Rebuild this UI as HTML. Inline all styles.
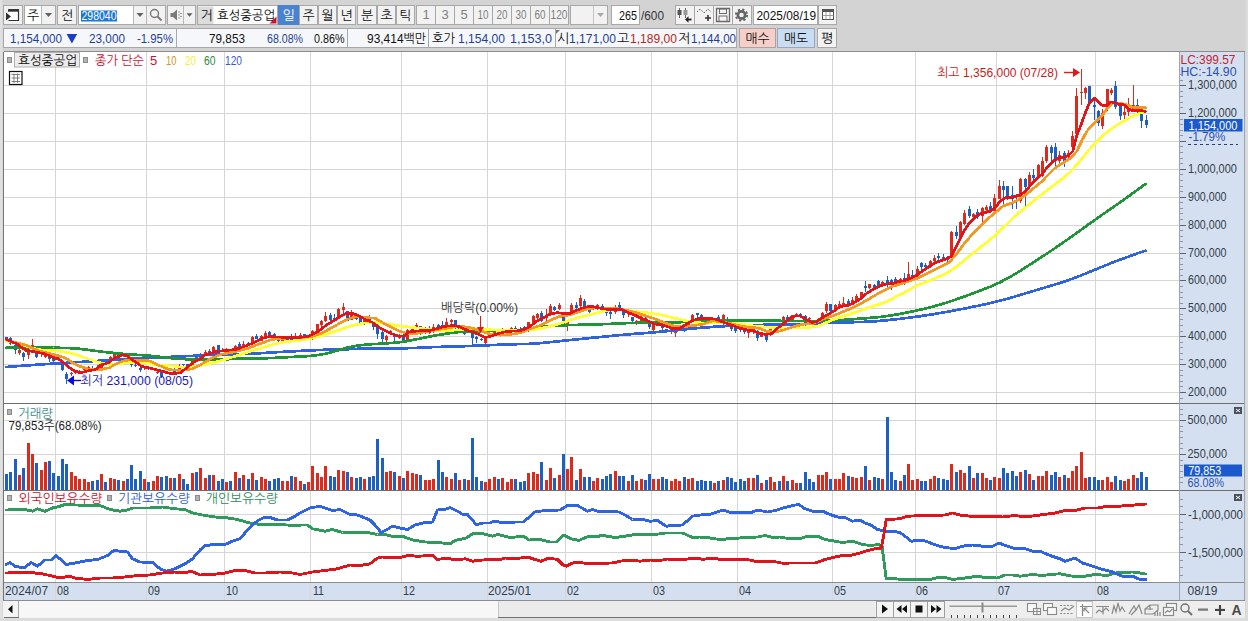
<!DOCTYPE html>
<html lang="ko"><head><meta charset="utf-8"><title>효성중공업 차트</title>
<style>html,body{margin:0;padding:0;background:#d3d3d3;overflow:hidden}svg{display:block}text{white-space:pre}</style>
</head><body>
<svg width="1248" height="621" viewBox="0 0 1248 621" font-family="'Liberation Sans', 'NanumGothic', 'Noto Sans CJK KR', sans-serif">
<rect x="0" y="0" width="1248" height="621" fill="#d3d3d3" />
<rect x="0" y="0" width="2.5" height="621" fill="#e0e0e0" />
<rect x="1245.5" y="0" width="2.5" height="621" fill="#dcdcdc" />
<rect x="0" y="618" width="1248" height="3" fill="#dcdcdc" />
<rect x="3.5" y="5.5" width="19.0" height="19.0" fill="#f2f2f2" stroke="#a8a8a8" stroke-width="1" shape-rendering="crispEdges"/>
<path d="M8.5 9.5H18.5V20.5H8.5" fill="#fff" stroke="#333" stroke-width="1.2"/>
<path d="M8 10.5H19" stroke="#333" stroke-width="2.4"/>
<polygon points="6,12.5 11,16.5 6,20.5" fill="#333"/>
<rect x="24.5" y="5.5" width="31.0" height="19.0" fill="#f2f2f2" stroke="#a8a8a8" stroke-width="1" shape-rendering="crispEdges"/>
<rect x="25" y="6" width="16" height="18" fill="#ffffff" />
<line x1="41.5" y1="6" x2="41.5" y2="24" stroke="#b8b8b8" stroke-width="1" shape-rendering="crispEdges"/>
<text x="27" y="19.5" font-size="13" fill="#111" text-anchor="start" >주</text>
<polygon points="45.0,13.0 52.0,13.0 48.5,17.0" fill="#606060"/>
<rect x="57.5" y="5.5" width="19.0" height="19.0" fill="#f2f2f2" stroke="#a8a8a8" stroke-width="1" shape-rendering="crispEdges"/>
<text x="61" y="19.5" font-size="13" fill="#111" text-anchor="start" >전</text>
<rect x="78.5" y="5.5" width="86.5" height="19.0" fill="#f2f2f2" stroke="#a8a8a8" stroke-width="1" shape-rendering="crispEdges"/>
<rect x="79" y="6" width="54" height="18" fill="#ffffff" />
<rect x="81" y="10.5" width="36" height="11" fill="#1c78d2" />
<text x="81.5" y="19.5" font-size="13" fill="#ffffff" text-anchor="start" textLength="35" lengthAdjust="spacingAndGlyphs" >298040</text>
<line x1="133.5" y1="6" x2="133.5" y2="24" stroke="#b8b8b8" stroke-width="1" shape-rendering="crispEdges"/>
<polygon points="136.5,13.0 143.5,13.0 140,17.0" fill="#606060"/>
<line x1="146.5" y1="6" x2="146.5" y2="24" stroke="#b8b8b8" stroke-width="1" shape-rendering="crispEdges"/>
<circle cx="154.5" cy="13.5" r="4" fill="none" stroke="#777" stroke-width="1.4"/>
<line x1="157.5" y1="16.5" x2="161.5" y2="20.5" stroke="#777" stroke-width="1.8" />
<rect x="167" y="5.5" width="28" height="19.0" fill="#f2f2f2" stroke="#a8a8a8" stroke-width="1" shape-rendering="crispEdges"/>
<path d="M170.5 13H173L177 9.5V20.5L173 17H170.5Z" fill="#7a7a7a"/>
<path d="M179 11.5v1M179 14.5v1M179 17.5v1M181 13v1M181 16v1" stroke="#606060" stroke-width="1.2"/>
<line x1="183.5" y1="6" x2="183.5" y2="24" stroke="#b8b8b8" stroke-width="1" shape-rendering="crispEdges"/>
<polygon points="186.5,13.25 192.5,13.25 189.5,16.75" fill="#606060"/>
<rect x="197" y="5.5" width="80" height="19.0" fill="#ffffff" stroke="#a8a8a8" stroke-width="1" shape-rendering="crispEdges"/>
<rect x="198" y="6.5" width="15.5" height="17.5" fill="#dcdcdc" />
<text x="200.5" y="19.5" font-size="13" fill="#111" text-anchor="start" >거</text>
<text x="217" y="19.5" font-size="13" fill="#111" text-anchor="start" textLength="58" lengthAdjust="spacingAndGlyphs" >효성중공업</text>
<polygon points="276.5,16.5 276.5,23.5 269.5,23.5" fill="#d01030"/>
<rect x="278.5" y="5.5" width="19.5" height="19.0" fill="#4a82d2" stroke="#4a82d2" stroke-width="1" shape-rendering="crispEdges"/>
<text x="282.5" y="19.5" font-size="13" fill="#ffffff" text-anchor="start" >일</text>
<rect x="299.5" y="5.5" width="18.0" height="19.0" fill="#f2f2f2" stroke="#a8a8a8" stroke-width="1" shape-rendering="crispEdges"/>
<text x="308.5" y="19.5" font-size="13" fill="#111" text-anchor="middle" >주</text>
<rect x="318.5" y="5.5" width="18.0" height="19.0" fill="#f2f2f2" stroke="#a8a8a8" stroke-width="1" shape-rendering="crispEdges"/>
<text x="327.5" y="19.5" font-size="13" fill="#111" text-anchor="middle" >월</text>
<rect x="337.5" y="5.5" width="17.5" height="19.0" fill="#f2f2f2" stroke="#a8a8a8" stroke-width="1" shape-rendering="crispEdges"/>
<text x="346.25" y="19.5" font-size="13" fill="#111" text-anchor="middle" >년</text>
<rect x="357.5" y="5.5" width="19.0" height="19.0" fill="#f2f2f2" stroke="#a8a8a8" stroke-width="1" shape-rendering="crispEdges"/>
<text x="367.0" y="19.5" font-size="13" fill="#111" text-anchor="middle" >분</text>
<rect x="377.5" y="5.5" width="18.0" height="19.0" fill="#f2f2f2" stroke="#a8a8a8" stroke-width="1" shape-rendering="crispEdges"/>
<text x="386.5" y="19.5" font-size="13" fill="#111" text-anchor="middle" >초</text>
<rect x="396.5" y="5.5" width="18.0" height="19.0" fill="#f2f2f2" stroke="#a8a8a8" stroke-width="1" shape-rendering="crispEdges"/>
<text x="405.5" y="19.5" font-size="13" fill="#111" text-anchor="middle" >틱</text>
<rect x="416.5" y="5.5" width="19.0" height="19.0" fill="#f2f2f2" stroke="#a8a8a8" stroke-width="1" shape-rendering="crispEdges"/>
<text x="426.0" y="19" font-size="13" fill="#808080" text-anchor="middle" >1</text>
<rect x="435.5" y="5.5" width="19.0" height="19.0" fill="#f2f2f2" stroke="#a8a8a8" stroke-width="1" shape-rendering="crispEdges"/>
<text x="445.0" y="19" font-size="13" fill="#808080" text-anchor="middle" >3</text>
<rect x="454.5" y="5.5" width="19.0" height="19.0" fill="#f2f2f2" stroke="#a8a8a8" stroke-width="1" shape-rendering="crispEdges"/>
<text x="464.0" y="19" font-size="13" fill="#808080" text-anchor="middle" >5</text>
<rect x="473.5" y="5.5" width="19.0" height="19.0" fill="#f2f2f2" stroke="#a8a8a8" stroke-width="1" shape-rendering="crispEdges"/>
<text x="483.0" y="19" font-size="13" fill="#808080" text-anchor="middle" textLength="11" lengthAdjust="spacingAndGlyphs" >10</text>
<rect x="492.5" y="5.5" width="19.0" height="19.0" fill="#f2f2f2" stroke="#a8a8a8" stroke-width="1" shape-rendering="crispEdges"/>
<text x="502.0" y="19" font-size="13" fill="#808080" text-anchor="middle" textLength="11" lengthAdjust="spacingAndGlyphs" >20</text>
<rect x="511.5" y="5.5" width="19.0" height="19.0" fill="#f2f2f2" stroke="#a8a8a8" stroke-width="1" shape-rendering="crispEdges"/>
<text x="521.0" y="19" font-size="13" fill="#808080" text-anchor="middle" textLength="11" lengthAdjust="spacingAndGlyphs" >30</text>
<rect x="530.5" y="5.5" width="19.0" height="19.0" fill="#f2f2f2" stroke="#a8a8a8" stroke-width="1" shape-rendering="crispEdges"/>
<text x="540.0" y="19" font-size="13" fill="#808080" text-anchor="middle" textLength="11" lengthAdjust="spacingAndGlyphs" >60</text>
<rect x="549.5" y="5.5" width="19.0" height="19.0" fill="#f2f2f2" stroke="#a8a8a8" stroke-width="1" shape-rendering="crispEdges"/>
<text x="559.0" y="19" font-size="13" fill="#808080" text-anchor="middle" textLength="17" lengthAdjust="spacingAndGlyphs" >120</text>
<rect x="570.5" y="5.5" width="37.0" height="19.0" fill="#f2f2f2" stroke="#a8a8a8" stroke-width="1" shape-rendering="crispEdges"/>
<line x1="593.5" y1="6" x2="593.5" y2="24" stroke="#c4c4c4" stroke-width="1" shape-rendering="crispEdges"/>
<polygon points="597.0,13.0 604.0,13.0 600.5,17.0" fill="#a8a8a8"/>
<rect x="611.5" y="5.5" width="28.0" height="19.0" fill="#ffffff" stroke="#a8a8a8" stroke-width="1" shape-rendering="crispEdges"/>
<text x="637" y="19.5" font-size="13" fill="#111" text-anchor="end" textLength="18" lengthAdjust="spacingAndGlyphs" >265</text>
<text x="641" y="19.5" font-size="13" fill="#333" text-anchor="start" textLength="23" lengthAdjust="spacingAndGlyphs" >/600</text>
<rect x="675.5" y="5.5" width="19.0" height="19.0" fill="#f2f2f2" stroke="#a8a8a8" stroke-width="1" shape-rendering="crispEdges"/>
<rect x="694.5" y="5.5" width="19.0" height="19.0" fill="#f2f2f2" stroke="#a8a8a8" stroke-width="1" shape-rendering="crispEdges"/>
<rect x="713.5" y="5.5" width="19.0" height="19.0" fill="#f2f2f2" stroke="#a8a8a8" stroke-width="1" shape-rendering="crispEdges"/>
<rect x="732.5" y="5.5" width="19.0" height="19.0" fill="#f2f2f2" stroke="#a8a8a8" stroke-width="1" shape-rendering="crispEdges"/>
<g transform="translate(-1,0)">
<path d="M680.5 8v10M686.5 8v10" stroke="#666" stroke-width="1"/><rect x="678.5" y="10" width="4" height="5" fill="#555"/><rect x="684.5" y="10" width="4" height="5" fill="#999"/>
<path d="M692.5 19.5h-4" stroke="#222" stroke-width="1.8"/><polygon points="686,19.5 689.5,16.3 689.5,22.7" fill="#222"/>
<path d="M698 12l3-3 4 4 4-4 3 3" stroke="#666" stroke-width="1" fill="none" stroke-dasharray="1.5,1"/>
<path d="M706 18h6M709 15v6" stroke="#333" stroke-width="1.6"/>
<path d="M717.5 8.5H730.5V21.5H717.5Z" fill="#f4f4f4" stroke="#6a6a6a" stroke-width="1.3"/><rect x="720.5" y="9" width="7" height="4.5" fill="none" stroke="#6a6a6a" stroke-width="1"/><rect x="720" y="16" width="8" height="5.5" fill="none" stroke="#6a6a6a" stroke-width="1"/>
<circle cx="742.5" cy="15" r="3.6" fill="none" stroke="#666" stroke-width="2.6"/><circle cx="742.5" cy="15" r="5.6" fill="none" stroke="#666" stroke-width="2" stroke-dasharray="2.2,2.2"/>
</g>
<rect x="753.5" y="5.5" width="64.0" height="19.0" fill="#ffffff" stroke="#a8a8a8" stroke-width="1" shape-rendering="crispEdges"/>
<text x="756.5" y="19.5" font-size="13" fill="#111" text-anchor="start" textLength="59.5" lengthAdjust="spacingAndGlyphs" >2025/08/19</text>
<rect x="818.5" y="5.5" width="18.0" height="19.0" fill="#f2f2f2" stroke="#a8a8a8" stroke-width="1" shape-rendering="crispEdges"/>
<rect x="822.5" y="9.5" width="11" height="10" fill="#fff" stroke="#555" stroke-width="1"/><path d="M822.5 11H833.5" stroke="#555" stroke-width="2"/><path d="M826 12v7.5M830 12v7.5M822.5 15.5h11" stroke="#888" stroke-width="0.8"/>
<rect x="3.5" y="28.5" width="172.5" height="19.0" fill="#f6f7fa" stroke="#a8a8a8" stroke-width="1" shape-rendering="crispEdges"/>
<text x="10" y="42.5" font-size="13" fill="#1e3f96" text-anchor="start" textLength="52" lengthAdjust="spacingAndGlyphs" >1,154,000</text>
<polygon points="66.6,34 77.2,34 71.9,43.4" fill="#1a3ec8"/>
<text x="89" y="42.5" font-size="13" fill="#1e3f96" text-anchor="start" textLength="36" lengthAdjust="spacingAndGlyphs" >23,000</text>
<text x="137" y="42.5" font-size="13" fill="#1e3f96" text-anchor="start" textLength="36" lengthAdjust="spacingAndGlyphs" >-1.95%</text>
<rect x="176" y="28.5" width="171.5" height="19.0" fill="#f6f7fa" stroke="#a8a8a8" stroke-width="1" shape-rendering="crispEdges"/>
<text x="209" y="42.5" font-size="13" fill="#111" text-anchor="start" textLength="36" lengthAdjust="spacingAndGlyphs" >79,853</text>
<text x="267" y="42.5" font-size="13" fill="#1e3f96" text-anchor="start" textLength="36" lengthAdjust="spacingAndGlyphs" >68.08%</text>
<text x="314" y="42.5" font-size="13" fill="#111" text-anchor="start" textLength="30.5" lengthAdjust="spacingAndGlyphs" >0.86%</text>
<rect x="347.5" y="28.5" width="81.0" height="19.0" fill="#f6f7fa" stroke="#a8a8a8" stroke-width="1" shape-rendering="crispEdges"/>
<text x="367" y="42.5" font-size="13" fill="#111" text-anchor="start" textLength="59" lengthAdjust="spacingAndGlyphs" >93,414백만</text>
<rect x="428.5" y="28.5" width="127.0" height="19.0" fill="#f6f7fa" stroke="#a8a8a8" stroke-width="1" shape-rendering="crispEdges"/>
<text x="432" y="42.5" font-size="13" fill="#111" text-anchor="start" textLength="23" lengthAdjust="spacingAndGlyphs" >호가</text>
<text x="458" y="42.5" font-size="13" fill="#1e3f96" text-anchor="start" textLength="47" lengthAdjust="spacingAndGlyphs" >1,154,00</text>
<text x="510" y="42.5" font-size="13" fill="#1e3f96" text-anchor="start" textLength="42" lengthAdjust="spacingAndGlyphs" >1,153,0</text>
<rect x="555.5" y="28.5" width="181.0" height="19.0" fill="#f6f7fa" stroke="#a8a8a8" stroke-width="1" shape-rendering="crispEdges"/>
<polygon points="556,30 560,30 556,34" fill="#777"/>
<text x="557" y="42.5" font-size="13" fill="#111" text-anchor="start" >시</text>
<text x="569" y="42.5" font-size="13" fill="#1e3f96" text-anchor="start" textLength="47" lengthAdjust="spacingAndGlyphs" >1,171,00</text>
<text x="617" y="42.5" font-size="13" fill="#111" text-anchor="start" >고</text>
<text x="630" y="42.5" font-size="13" fill="#b8281c" text-anchor="start" textLength="47" lengthAdjust="spacingAndGlyphs" >1,189,00</text>
<text x="678" y="42.5" font-size="13" fill="#111" text-anchor="start" >저</text>
<text x="691" y="42.5" font-size="13" fill="#1e3f96" text-anchor="start" textLength="45" lengthAdjust="spacingAndGlyphs" >1,144,00</text>
<rect x="739.5" y="28.5" width="36" height="19.0" fill="#f6d0c8" stroke="#b0a0a0" stroke-width="1" shape-rendering="crispEdges"/>
<text x="757.5" y="42.5" font-size="13" fill="#111" text-anchor="middle" textLength="24" lengthAdjust="spacingAndGlyphs" >매수</text>
<rect x="777.5" y="28.5" width="37" height="19.0" fill="#c8ddf4" stroke="#98a8b8" stroke-width="1" shape-rendering="crispEdges"/>
<text x="796" y="42.5" font-size="13" fill="#111" text-anchor="middle" textLength="24" lengthAdjust="spacingAndGlyphs" >매도</text>
<rect x="817.5" y="28.5" width="19" height="19.0" fill="#f2f2f2" stroke="#a8a8a8" stroke-width="1" shape-rendering="crispEdges"/>
<text x="827" y="42.5" font-size="13" fill="#111" text-anchor="middle" >평</text>
<rect x="4" y="52" width="1175" height="548" fill="#ffffff" />
<rect x="1179" y="52" width="66" height="548" fill="#d4e0f0" />
<rect x="4" y="582.5" width="1241" height="17.5" fill="#d4e0f0" />
<g shape-rendering="crispEdges">
<line x1="55.5" y1="52" x2="55.5" y2="600" stroke="#d6d6d6" stroke-width="1" />
<line x1="146.5" y1="52" x2="146.5" y2="600" stroke="#d6d6d6" stroke-width="1" />
<line x1="224.5" y1="52" x2="224.5" y2="600" stroke="#d6d6d6" stroke-width="1" />
<line x1="310.5" y1="52" x2="310.5" y2="600" stroke="#d6d6d6" stroke-width="1" />
<line x1="401.5" y1="52" x2="401.5" y2="600" stroke="#d6d6d6" stroke-width="1" />
<line x1="487.5" y1="52" x2="487.5" y2="600" stroke="#d6d6d6" stroke-width="1" />
<line x1="565.5" y1="52" x2="565.5" y2="600" stroke="#d6d6d6" stroke-width="1" />
<line x1="651.5" y1="52" x2="651.5" y2="600" stroke="#d6d6d6" stroke-width="1" />
<line x1="737.5" y1="52" x2="737.5" y2="600" stroke="#d6d6d6" stroke-width="1" />
<line x1="832.5" y1="52" x2="832.5" y2="600" stroke="#d6d6d6" stroke-width="1" />
<line x1="915.5" y1="52" x2="915.5" y2="600" stroke="#d6d6d6" stroke-width="1" />
<line x1="996.5" y1="52" x2="996.5" y2="600" stroke="#d6d6d6" stroke-width="1" />
<line x1="1095.5" y1="52" x2="1095.5" y2="600" stroke="#d6d6d6" stroke-width="1" />
<line x1="4" y1="392.5" x2="1179" y2="392.5" stroke="#d6d6d6" stroke-width="1" />
<line x1="4" y1="364.5" x2="1179" y2="364.5" stroke="#d6d6d6" stroke-width="1" />
<line x1="4" y1="336.5" x2="1179" y2="336.5" stroke="#d6d6d6" stroke-width="1" />
<line x1="4" y1="308.5" x2="1179" y2="308.5" stroke="#d6d6d6" stroke-width="1" />
<line x1="4" y1="280.5" x2="1179" y2="280.5" stroke="#d6d6d6" stroke-width="1" />
<line x1="4" y1="253.5" x2="1179" y2="253.5" stroke="#d6d6d6" stroke-width="1" />
<line x1="4" y1="225.5" x2="1179" y2="225.5" stroke="#d6d6d6" stroke-width="1" />
<line x1="4" y1="197.5" x2="1179" y2="197.5" stroke="#d6d6d6" stroke-width="1" />
<line x1="4" y1="169.5" x2="1179" y2="169.5" stroke="#d6d6d6" stroke-width="1" />
<line x1="4" y1="141.5" x2="1179" y2="141.5" stroke="#d6d6d6" stroke-width="1" />
<line x1="4" y1="113.5" x2="1179" y2="113.5" stroke="#d6d6d6" stroke-width="1" />
<line x1="4" y1="85.5" x2="1179" y2="85.5" stroke="#d6d6d6" stroke-width="1" />
<line x1="4" y1="420.5" x2="1179" y2="420.5" stroke="#d6d6d6" stroke-width="1" />
<line x1="4" y1="454.5" x2="1179" y2="454.5" stroke="#d6d6d6" stroke-width="1" />
<line x1="4" y1="514.5" x2="1179" y2="514.5" stroke="#d6d6d6" stroke-width="1" />
<line x1="4" y1="552.5" x2="1179" y2="552.5" stroke="#d6d6d6" stroke-width="1" />
</g>
<g shape-rendering="crispEdges">
<line x1="6.5" y1="336.8" x2="6.5" y2="341.3" stroke="#1e5fc2" stroke-width="1" />
<rect x="5" y="337.4" width="3" height="3.2" fill="#1e5fc2" />
<line x1="10.5" y1="337.4" x2="10.5" y2="344.5" stroke="#1e5fc2" stroke-width="1" />
<rect x="9" y="338.0" width="3" height="5.8" fill="#1e5fc2" />
<line x1="15.5" y1="343.8" x2="15.5" y2="354.1" stroke="#1e5fc2" stroke-width="1" />
<rect x="14" y="345.1" width="3" height="5.2" fill="#1e5fc2" />
<line x1="19.5" y1="349.0" x2="19.5" y2="355.4" stroke="#dc2a1c" stroke-width="1" />
<rect x="18" y="350.3" width="3" height="2.6" fill="#dc2a1c" />
<line x1="23.5" y1="352.2" x2="23.5" y2="360.6" stroke="#1e5fc2" stroke-width="1" />
<rect x="22" y="352.9" width="3" height="4.5" fill="#1e5fc2" />
<line x1="28.5" y1="346.4" x2="28.5" y2="358.7" stroke="#dc2a1c" stroke-width="1" />
<rect x="27" y="347.7" width="3" height="7.7" fill="#dc2a1c" />
<line x1="32.5" y1="339.3" x2="32.5" y2="349.0" stroke="#dc2a1c" stroke-width="1" />
<rect x="31" y="345.1" width="3" height="2.6" fill="#dc2a1c" />
<line x1="36.5" y1="349.0" x2="36.5" y2="358.0" stroke="#1e5fc2" stroke-width="1" />
<rect x="35" y="350.3" width="3" height="7.1" fill="#1e5fc2" />
<line x1="41.5" y1="349.0" x2="41.5" y2="357.4" stroke="#dc2a1c" stroke-width="1" />
<rect x="40" y="350.9" width="3" height="3.2" fill="#dc2a1c" />
<line x1="45.5" y1="347.1" x2="45.5" y2="358.0" stroke="#dc2a1c" stroke-width="1" />
<rect x="44" y="351.6" width="3" height="5.8" fill="#dc2a1c" />
<line x1="49.5" y1="353.5" x2="49.5" y2="361.9" stroke="#1e5fc2" stroke-width="1" />
<rect x="48" y="354.1" width="3" height="4.5" fill="#1e5fc2" />
<line x1="53.5" y1="358.0" x2="53.5" y2="362.5" stroke="#1e5fc2" stroke-width="1" />
<rect x="52" y="358.7" width="3" height="2.6" fill="#1e5fc2" />
<line x1="58.5" y1="355.4" x2="58.5" y2="359.9" stroke="#1e5fc2" stroke-width="1" />
<rect x="57" y="356.7" width="3" height="1.9" fill="#1e5fc2" />
<line x1="62.5" y1="361.9" x2="62.5" y2="370.9" stroke="#1e5fc2" stroke-width="1" />
<rect x="61" y="362.5" width="3" height="7.7" fill="#1e5fc2" />
<line x1="66.5" y1="372.2" x2="66.5" y2="383.8" stroke="#1e5fc2" stroke-width="1" />
<rect x="65" y="373.5" width="3" height="5.1" fill="#1e5fc2" />
<line x1="71.5" y1="371.5" x2="71.5" y2="376.1" stroke="#dc2a1c" stroke-width="1" />
<rect x="70" y="372.8" width="3" height="1.3" fill="#dc2a1c" />
<line x1="75.5" y1="370.3" x2="75.5" y2="373.5" stroke="#dc2a1c" stroke-width="1" />
<rect x="74" y="370.9" width="3" height="1.9" fill="#dc2a1c" />
<line x1="79.5" y1="370.3" x2="79.5" y2="373.1" stroke="#dc2a1c" stroke-width="1" />
<rect x="78" y="370.9" width="3" height="1.7" fill="#dc2a1c" />
<line x1="84.5" y1="367.0" x2="84.5" y2="370.9" stroke="#dc2a1c" stroke-width="1" />
<rect x="83" y="367.7" width="3" height="1.9" fill="#dc2a1c" />
<line x1="88.5" y1="366.4" x2="88.5" y2="370.3" stroke="#dc2a1c" stroke-width="1" />
<rect x="87" y="367.0" width="3" height="1.9" fill="#dc2a1c" />
<line x1="92.5" y1="366.4" x2="92.5" y2="370.9" stroke="#1e5fc2" stroke-width="1" />
<rect x="91" y="367.7" width="3" height="1.9" fill="#1e5fc2" />
<line x1="97.5" y1="365.1" x2="97.5" y2="370.3" stroke="#1e5fc2" stroke-width="1" />
<rect x="96" y="367.0" width="3" height="1.9" fill="#1e5fc2" />
<line x1="101.5" y1="359.3" x2="101.5" y2="368.3" stroke="#dc2a1c" stroke-width="1" />
<rect x="100" y="359.9" width="3" height="7.7" fill="#dc2a1c" />
<line x1="105.5" y1="358.7" x2="105.5" y2="364.5" stroke="#1e5fc2" stroke-width="1" />
<rect x="104" y="359.9" width="3" height="1.9" fill="#1e5fc2" />
<line x1="110.5" y1="356.1" x2="110.5" y2="361.2" stroke="#dc2a1c" stroke-width="1" />
<rect x="109" y="356.7" width="3" height="3.9" fill="#dc2a1c" />
<line x1="114.5" y1="352.9" x2="114.5" y2="361.2" stroke="#dc2a1c" stroke-width="1" />
<rect x="113" y="354.1" width="3" height="5.8" fill="#dc2a1c" />
<line x1="118.5" y1="352.2" x2="118.5" y2="355.4" stroke="#1e5fc2" stroke-width="1" />
<rect x="117" y="352.9" width="3" height="1.3" fill="#1e5fc2" />
<line x1="123.5" y1="352.9" x2="123.5" y2="356.7" stroke="#dc2a1c" stroke-width="1" />
<rect x="122" y="354.1" width="3" height="1.3" fill="#dc2a1c" />
<line x1="127.5" y1="353.5" x2="127.5" y2="358.7" stroke="#1e5fc2" stroke-width="1" />
<rect x="126" y="354.8" width="3" height="2.6" fill="#1e5fc2" />
<line x1="131.5" y1="358.0" x2="131.5" y2="367.0" stroke="#1e5fc2" stroke-width="1" />
<rect x="130" y="358.7" width="3" height="5.8" fill="#1e5fc2" />
<line x1="135.5" y1="363.8" x2="135.5" y2="367.0" stroke="#1e5fc2" stroke-width="1" />
<rect x="134" y="364.8" width="3" height="1.0" fill="#1e5fc2" />
<line x1="140.5" y1="367.0" x2="140.5" y2="371.5" stroke="#1e5fc2" stroke-width="1" />
<rect x="139" y="367.7" width="3" height="1.9" fill="#1e5fc2" />
<line x1="144.5" y1="365.7" x2="144.5" y2="369.6" stroke="#dc2a1c" stroke-width="1" />
<rect x="143" y="367.0" width="3" height="1.3" fill="#dc2a1c" />
<line x1="148.5" y1="366.4" x2="148.5" y2="369.6" stroke="#1e5fc2" stroke-width="1" />
<rect x="147" y="367.0" width="3" height="1.9" fill="#1e5fc2" />
<line x1="153.5" y1="367.9" x2="153.5" y2="370.0" stroke="#dc2a1c" stroke-width="1" />
<rect x="152" y="368.3" width="3" height="1.3" fill="#dc2a1c" />
<line x1="157.5" y1="370.9" x2="157.5" y2="374.1" stroke="#dc2a1c" stroke-width="1" />
<rect x="156" y="371.5" width="3" height="1.9" fill="#dc2a1c" />
<line x1="161.5" y1="370.0" x2="161.5" y2="378.2" stroke="#1e5fc2" stroke-width="1" />
<rect x="160" y="370.5" width="3" height="5.8" fill="#1e5fc2" />
<line x1="166.5" y1="372.0" x2="166.5" y2="374.4" stroke="#dc2a1c" stroke-width="1" />
<rect x="165" y="372.4" width="3" height="1.4" fill="#dc2a1c" />
<line x1="170.5" y1="371.5" x2="170.5" y2="374.2" stroke="#dc2a1c" stroke-width="1" />
<rect x="169" y="372.0" width="3" height="1.4" fill="#dc2a1c" />
<line x1="174.5" y1="366.6" x2="174.5" y2="372.0" stroke="#1e5fc2" stroke-width="1" />
<rect x="173" y="368.6" width="3" height="2.9" fill="#1e5fc2" />
<line x1="179.5" y1="364.2" x2="179.5" y2="371.5" stroke="#dc2a1c" stroke-width="1" />
<rect x="178" y="366.6" width="3" height="4.3" fill="#dc2a1c" />
<line x1="183.5" y1="363.9" x2="183.5" y2="365.7" stroke="#1e5fc2" stroke-width="1" />
<rect x="182" y="364.2" width="3" height="1.0" fill="#1e5fc2" />
<line x1="187.5" y1="364.2" x2="187.5" y2="367.6" stroke="#1e5fc2" stroke-width="1" />
<rect x="186" y="364.2" width="3" height="2.9" fill="#1e5fc2" />
<line x1="192.5" y1="358.0" x2="192.5" y2="365.2" stroke="#dc2a1c" stroke-width="1" />
<rect x="191" y="358.4" width="3" height="6.3" fill="#dc2a1c" />
<line x1="196.5" y1="354.1" x2="196.5" y2="359.9" stroke="#1e5fc2" stroke-width="1" />
<rect x="195" y="354.6" width="3" height="4.3" fill="#1e5fc2" />
<line x1="200.5" y1="353.1" x2="200.5" y2="361.3" stroke="#dc2a1c" stroke-width="1" />
<rect x="199" y="353.6" width="3" height="7.2" fill="#dc2a1c" />
<line x1="205.5" y1="350.2" x2="205.5" y2="355.5" stroke="#dc2a1c" stroke-width="1" />
<rect x="204" y="351.7" width="3" height="2.9" fill="#dc2a1c" />
<line x1="209.5" y1="348.8" x2="209.5" y2="355.1" stroke="#1e5fc2" stroke-width="1" />
<rect x="208" y="351.2" width="3" height="2.9" fill="#1e5fc2" />
<line x1="213.5" y1="345.9" x2="213.5" y2="352.2" stroke="#dc2a1c" stroke-width="1" />
<rect x="212" y="347.3" width="3" height="4.3" fill="#dc2a1c" />
<line x1="218.5" y1="344.9" x2="218.5" y2="350.2" stroke="#1e5fc2" stroke-width="1" />
<rect x="217" y="345.4" width="3" height="4.3" fill="#1e5fc2" />
<line x1="222.5" y1="347.8" x2="222.5" y2="352.2" stroke="#1e5fc2" stroke-width="1" />
<rect x="221" y="349.7" width="3" height="1.9" fill="#1e5fc2" />
<line x1="226.5" y1="348.3" x2="226.5" y2="351.7" stroke="#dc2a1c" stroke-width="1" />
<rect x="225" y="349.3" width="3" height="1.9" fill="#dc2a1c" />
<line x1="230.5" y1="349.4" x2="230.5" y2="351.5" stroke="#dc2a1c" stroke-width="1" />
<rect x="229" y="349.7" width="3" height="1.4" fill="#dc2a1c" />
<line x1="235.5" y1="344.9" x2="235.5" y2="350.7" stroke="#dc2a1c" stroke-width="1" />
<rect x="234" y="346.4" width="3" height="3.9" fill="#dc2a1c" />
<line x1="239.5" y1="342.0" x2="239.5" y2="347.8" stroke="#1e5fc2" stroke-width="1" />
<rect x="238" y="343.9" width="3" height="2.9" fill="#1e5fc2" />
<line x1="243.5" y1="341.0" x2="243.5" y2="346.8" stroke="#dc2a1c" stroke-width="1" />
<rect x="242" y="343.5" width="3" height="2.4" fill="#dc2a1c" />
<line x1="248.5" y1="342.0" x2="248.5" y2="345.9" stroke="#1e5fc2" stroke-width="1" />
<rect x="247" y="342.5" width="3" height="2.9" fill="#1e5fc2" />
<line x1="252.5" y1="336.2" x2="252.5" y2="343.0" stroke="#dc2a1c" stroke-width="1" />
<rect x="251" y="336.7" width="3" height="5.8" fill="#dc2a1c" />
<line x1="256.5" y1="334.3" x2="256.5" y2="339.1" stroke="#1e5fc2" stroke-width="1" />
<rect x="255" y="335.7" width="3" height="2.9" fill="#1e5fc2" />
<line x1="261.5" y1="334.8" x2="261.5" y2="341.1" stroke="#dc2a1c" stroke-width="1" />
<rect x="260" y="335.7" width="3" height="4.8" fill="#dc2a1c" />
<line x1="265.5" y1="330.9" x2="265.5" y2="337.2" stroke="#dc2a1c" stroke-width="1" />
<rect x="264" y="333.3" width="3" height="2.9" fill="#dc2a1c" />
<line x1="269.5" y1="330.9" x2="269.5" y2="336.2" stroke="#1e5fc2" stroke-width="1" />
<rect x="268" y="331.9" width="3" height="3.9" fill="#1e5fc2" />
<line x1="274.5" y1="332.9" x2="274.5" y2="338.6" stroke="#1e5fc2" stroke-width="1" />
<rect x="273" y="333.8" width="3" height="3.9" fill="#1e5fc2" />
<line x1="278.5" y1="335.7" x2="278.5" y2="342.0" stroke="#1e5fc2" stroke-width="1" />
<rect x="277" y="336.7" width="3" height="3.9" fill="#1e5fc2" />
<line x1="282.5" y1="337.2" x2="282.5" y2="343.0" stroke="#dc2a1c" stroke-width="1" />
<rect x="281" y="338.2" width="3" height="2.9" fill="#dc2a1c" />
<line x1="287.5" y1="338.2" x2="287.5" y2="341.5" stroke="#1e5fc2" stroke-width="1" />
<rect x="286" y="338.6" width="3" height="1.4" fill="#1e5fc2" />
<line x1="291.5" y1="334.3" x2="291.5" y2="341.5" stroke="#1e5fc2" stroke-width="1" />
<rect x="290" y="338.2" width="3" height="1.4" fill="#1e5fc2" />
<line x1="295.5" y1="333.3" x2="295.5" y2="339.1" stroke="#dc2a1c" stroke-width="1" />
<rect x="294" y="336.2" width="3" height="2.4" fill="#dc2a1c" />
<line x1="300.5" y1="333.3" x2="300.5" y2="338.2" stroke="#dc2a1c" stroke-width="1" />
<rect x="299" y="334.8" width="3" height="2.9" fill="#dc2a1c" />
<line x1="304.5" y1="334.3" x2="304.5" y2="337.7" stroke="#1e5fc2" stroke-width="1" />
<rect x="303" y="334.3" width="3" height="1.4" fill="#1e5fc2" />
<line x1="308.5" y1="335.7" x2="308.5" y2="338.2" stroke="#dc2a1c" stroke-width="1" />
<rect x="307" y="336.2" width="3" height="1.0" fill="#dc2a1c" />
<line x1="312.5" y1="330.0" x2="312.5" y2="339.6" stroke="#dc2a1c" stroke-width="1" />
<rect x="311" y="330.9" width="3" height="6.3" fill="#dc2a1c" />
<line x1="317.5" y1="324.2" x2="317.5" y2="330.9" stroke="#dc2a1c" stroke-width="1" />
<rect x="316" y="324.2" width="3" height="6.3" fill="#dc2a1c" />
<line x1="321.5" y1="319.8" x2="321.5" y2="327.1" stroke="#dc2a1c" stroke-width="1" />
<rect x="320" y="321.3" width="3" height="3.9" fill="#dc2a1c" />
<line x1="325.5" y1="312.1" x2="325.5" y2="321.7" stroke="#dc2a1c" stroke-width="1" />
<rect x="324" y="316.4" width="3" height="4.8" fill="#dc2a1c" />
<line x1="330.5" y1="313.0" x2="330.5" y2="321.3" stroke="#1e5fc2" stroke-width="1" />
<rect x="329" y="314.5" width="3" height="5.3" fill="#1e5fc2" />
<line x1="334.5" y1="314.0" x2="334.5" y2="321.3" stroke="#1e5fc2" stroke-width="1" />
<rect x="333" y="318.4" width="3" height="2.4" fill="#1e5fc2" />
<line x1="338.5" y1="308.2" x2="338.5" y2="317.4" stroke="#dc2a1c" stroke-width="1" />
<rect x="337" y="309.2" width="3" height="7.7" fill="#dc2a1c" />
<line x1="343.5" y1="303.0" x2="343.5" y2="312.7" stroke="#dc2a1c" stroke-width="1" />
<rect x="342" y="307.4" width="3" height="2.4" fill="#dc2a1c" />
<line x1="347.5" y1="310.8" x2="347.5" y2="320.9" stroke="#1e5fc2" stroke-width="1" />
<rect x="346" y="311.3" width="3" height="9.2" fill="#1e5fc2" />
<line x1="351.5" y1="310.3" x2="351.5" y2="320.4" stroke="#dc2a1c" stroke-width="1" />
<rect x="350" y="313.2" width="3" height="6.8" fill="#dc2a1c" />
<line x1="356.5" y1="315.1" x2="356.5" y2="320.4" stroke="#1e5fc2" stroke-width="1" />
<rect x="355" y="315.6" width="3" height="3.4" fill="#1e5fc2" />
<line x1="360.5" y1="315.6" x2="360.5" y2="323.8" stroke="#1e5fc2" stroke-width="1" />
<rect x="359" y="316.1" width="3" height="6.8" fill="#1e5fc2" />
<line x1="364.5" y1="319.0" x2="364.5" y2="324.8" stroke="#dc2a1c" stroke-width="1" />
<rect x="363" y="319.5" width="3" height="4.8" fill="#dc2a1c" />
<line x1="369.5" y1="315.1" x2="369.5" y2="323.3" stroke="#1e5fc2" stroke-width="1" />
<rect x="368" y="317.5" width="3" height="4.8" fill="#1e5fc2" />
<line x1="373.5" y1="320.9" x2="373.5" y2="329.6" stroke="#1e5fc2" stroke-width="1" />
<rect x="372" y="321.4" width="3" height="5.3" fill="#1e5fc2" />
<line x1="377.5" y1="323.3" x2="377.5" y2="338.8" stroke="#1e5fc2" stroke-width="1" />
<rect x="376" y="326.2" width="3" height="8.2" fill="#1e5fc2" />
<line x1="382.5" y1="330.6" x2="382.5" y2="341.7" stroke="#1e5fc2" stroke-width="1" />
<rect x="381" y="331.5" width="3" height="7.7" fill="#1e5fc2" />
<line x1="386.5" y1="334.9" x2="386.5" y2="341.7" stroke="#dc2a1c" stroke-width="1" />
<rect x="385" y="336.4" width="3" height="3.9" fill="#dc2a1c" />
<line x1="390.5" y1="330.1" x2="390.5" y2="333.0" stroke="#dc2a1c" stroke-width="1" />
<rect x="389" y="330.6" width="3" height="1.9" fill="#dc2a1c" />
<line x1="394.5" y1="333.0" x2="394.5" y2="341.2" stroke="#1e5fc2" stroke-width="1" />
<rect x="393" y="333.5" width="3" height="3.9" fill="#1e5fc2" />
<line x1="399.5" y1="333.5" x2="399.5" y2="339.3" stroke="#dc2a1c" stroke-width="1" />
<rect x="398" y="334.9" width="3" height="2.9" fill="#dc2a1c" />
<line x1="403.5" y1="334.0" x2="403.5" y2="341.2" stroke="#1e5fc2" stroke-width="1" />
<rect x="402" y="335.4" width="3" height="5.3" fill="#1e5fc2" />
<line x1="407.5" y1="329.1" x2="407.5" y2="340.7" stroke="#dc2a1c" stroke-width="1" />
<rect x="406" y="329.6" width="3" height="10.6" fill="#dc2a1c" />
<line x1="412.5" y1="327.2" x2="412.5" y2="333.5" stroke="#dc2a1c" stroke-width="1" />
<rect x="411" y="328.2" width="3" height="4.8" fill="#dc2a1c" />
<line x1="416.5" y1="323.3" x2="416.5" y2="328.2" stroke="#dc2a1c" stroke-width="1" />
<rect x="415" y="324.8" width="3" height="2.4" fill="#dc2a1c" />
<line x1="420.5" y1="325.7" x2="420.5" y2="335.4" stroke="#1e5fc2" stroke-width="1" />
<rect x="419" y="326.2" width="3" height="5.8" fill="#1e5fc2" />
<line x1="425.5" y1="327.2" x2="425.5" y2="333.5" stroke="#dc2a1c" stroke-width="1" />
<rect x="424" y="328.6" width="3" height="4.3" fill="#dc2a1c" />
<line x1="429.5" y1="326.2" x2="429.5" y2="333.5" stroke="#dc2a1c" stroke-width="1" />
<rect x="428" y="328.6" width="3" height="4.3" fill="#dc2a1c" />
<line x1="433.5" y1="324.3" x2="433.5" y2="332.5" stroke="#dc2a1c" stroke-width="1" />
<rect x="432" y="327.2" width="3" height="4.3" fill="#dc2a1c" />
<line x1="438.5" y1="323.8" x2="438.5" y2="328.2" stroke="#1e5fc2" stroke-width="1" />
<rect x="437" y="324.8" width="3" height="2.4" fill="#1e5fc2" />
<line x1="442.5" y1="320.9" x2="442.5" y2="328.2" stroke="#1e5fc2" stroke-width="1" />
<rect x="441" y="325.3" width="3" height="2.4" fill="#1e5fc2" />
<line x1="446.5" y1="318.0" x2="446.5" y2="327.2" stroke="#dc2a1c" stroke-width="1" />
<rect x="445" y="321.9" width="3" height="4.8" fill="#dc2a1c" />
<line x1="451.5" y1="319.0" x2="451.5" y2="323.8" stroke="#dc2a1c" stroke-width="1" />
<rect x="450" y="320.0" width="3" height="1.9" fill="#dc2a1c" />
<line x1="455.5" y1="320.0" x2="455.5" y2="329.6" stroke="#1e5fc2" stroke-width="1" />
<rect x="454" y="320.4" width="3" height="6.8" fill="#1e5fc2" />
<line x1="459.5" y1="326.7" x2="459.5" y2="330.1" stroke="#dc2a1c" stroke-width="1" />
<rect x="458" y="327.2" width="3" height="2.4" fill="#dc2a1c" />
<line x1="464.5" y1="326.7" x2="464.5" y2="334.9" stroke="#1e5fc2" stroke-width="1" />
<rect x="463" y="328.2" width="3" height="5.8" fill="#1e5fc2" />
<line x1="468.5" y1="327.2" x2="468.5" y2="331.5" stroke="#dc2a1c" stroke-width="1" />
<rect x="467" y="328.6" width="3" height="2.4" fill="#dc2a1c" />
<line x1="472.5" y1="328.6" x2="472.5" y2="346.0" stroke="#1e5fc2" stroke-width="1" />
<rect x="471" y="329.6" width="3" height="8.2" fill="#1e5fc2" />
<line x1="476.5" y1="336.4" x2="476.5" y2="342.7" stroke="#1e5fc2" stroke-width="1" />
<rect x="475" y="337.3" width="3" height="1.9" fill="#1e5fc2" />
<line x1="481.5" y1="338.3" x2="481.5" y2="340.7" stroke="#1e5fc2" stroke-width="1" />
<rect x="480" y="338.8" width="3" height="1.4" fill="#1e5fc2" />
<line x1="485.5" y1="337.3" x2="485.5" y2="343.6" stroke="#dc2a1c" stroke-width="1" />
<rect x="484" y="338.3" width="3" height="4.3" fill="#dc2a1c" />
<line x1="489.5" y1="334.9" x2="489.5" y2="337.8" stroke="#dc2a1c" stroke-width="1" />
<rect x="488" y="335.4" width="3" height="1.9" fill="#dc2a1c" />
<line x1="494.5" y1="331.1" x2="494.5" y2="336.4" stroke="#dc2a1c" stroke-width="1" />
<rect x="493" y="331.5" width="3" height="3.9" fill="#dc2a1c" />
<line x1="498.5" y1="329.6" x2="498.5" y2="335.4" stroke="#1e5fc2" stroke-width="1" />
<rect x="497" y="330.1" width="3" height="4.8" fill="#1e5fc2" />
<line x1="502.5" y1="328.2" x2="502.5" y2="335.4" stroke="#dc2a1c" stroke-width="1" />
<rect x="501" y="329.1" width="3" height="3.9" fill="#dc2a1c" />
<line x1="507.5" y1="330.1" x2="507.5" y2="333.5" stroke="#dc2a1c" stroke-width="1" />
<rect x="506" y="331.1" width="3" height="1.4" fill="#dc2a1c" />
<line x1="511.5" y1="327.2" x2="511.5" y2="333.5" stroke="#dc2a1c" stroke-width="1" />
<rect x="510" y="328.2" width="3" height="3.4" fill="#dc2a1c" />
<line x1="515.5" y1="326.2" x2="515.5" y2="332.5" stroke="#1e5fc2" stroke-width="1" />
<rect x="514" y="328.2" width="3" height="1.9" fill="#1e5fc2" />
<line x1="520.5" y1="327.2" x2="520.5" y2="332.5" stroke="#1e5fc2" stroke-width="1" />
<rect x="519" y="328.6" width="3" height="1.4" fill="#1e5fc2" />
<line x1="524.5" y1="326.2" x2="524.5" y2="331.5" stroke="#1e5fc2" stroke-width="1" />
<rect x="523" y="327.2" width="3" height="3.4" fill="#1e5fc2" />
<line x1="528.5" y1="321.9" x2="528.5" y2="331.5" stroke="#dc2a1c" stroke-width="1" />
<rect x="527" y="322.4" width="3" height="8.2" fill="#dc2a1c" />
<line x1="533.5" y1="315.1" x2="533.5" y2="323.9" stroke="#dc2a1c" stroke-width="1" />
<rect x="532" y="315.9" width="3" height="7.2" fill="#dc2a1c" />
<line x1="537.5" y1="312.7" x2="537.5" y2="319.9" stroke="#dc2a1c" stroke-width="1" />
<rect x="536" y="313.5" width="3" height="4.8" fill="#dc2a1c" />
<line x1="541.5" y1="311.1" x2="541.5" y2="322.3" stroke="#1e5fc2" stroke-width="1" />
<rect x="540" y="312.7" width="3" height="8.1" fill="#1e5fc2" />
<line x1="546.5" y1="308.7" x2="546.5" y2="320.5" stroke="#dc2a1c" stroke-width="1" />
<rect x="545" y="315.1" width="3" height="3.2" fill="#dc2a1c" />
<line x1="550.5" y1="303.8" x2="550.5" y2="315.9" stroke="#dc2a1c" stroke-width="1" />
<rect x="549" y="306.2" width="3" height="8.9" fill="#dc2a1c" />
<line x1="554.5" y1="306.2" x2="554.5" y2="311.1" stroke="#1e5fc2" stroke-width="1" />
<rect x="553" y="307.4" width="3" height="2.9" fill="#1e5fc2" />
<line x1="559.5" y1="303.0" x2="559.5" y2="310.3" stroke="#dc2a1c" stroke-width="1" />
<rect x="558" y="305.4" width="3" height="4.0" fill="#dc2a1c" />
<line x1="563.5" y1="315.1" x2="563.5" y2="324.8" stroke="#1e5fc2" stroke-width="1" />
<rect x="562" y="316.7" width="3" height="7.2" fill="#1e5fc2" />
<line x1="567.5" y1="320.7" x2="567.5" y2="331.2" stroke="#dc2a1c" stroke-width="1" />
<rect x="566" y="322.3" width="3" height="3.2" fill="#dc2a1c" />
<line x1="571.5" y1="303.0" x2="571.5" y2="315.9" stroke="#dc2a1c" stroke-width="1" />
<rect x="570" y="304.6" width="3" height="10.5" fill="#dc2a1c" />
<line x1="576.5" y1="302.2" x2="576.5" y2="308.6" stroke="#1e5fc2" stroke-width="1" />
<rect x="575" y="305.4" width="3" height="2.4" fill="#1e5fc2" />
<line x1="580.5" y1="295.0" x2="580.5" y2="307.0" stroke="#dc2a1c" stroke-width="1" />
<rect x="579" y="298.2" width="3" height="8.1" fill="#dc2a1c" />
<line x1="584.5" y1="299.0" x2="584.5" y2="308.6" stroke="#1e5fc2" stroke-width="1" />
<rect x="583" y="300.6" width="3" height="6.4" fill="#1e5fc2" />
<line x1="589.5" y1="307.8" x2="589.5" y2="312.7" stroke="#1e5fc2" stroke-width="1" />
<rect x="588" y="308.6" width="3" height="3.2" fill="#1e5fc2" />
<line x1="593.5" y1="305.4" x2="593.5" y2="310.3" stroke="#dc2a1c" stroke-width="1" />
<rect x="592" y="306.2" width="3" height="3.2" fill="#dc2a1c" />
<line x1="597.5" y1="303.8" x2="597.5" y2="309.5" stroke="#dc2a1c" stroke-width="1" />
<rect x="596" y="305.4" width="3" height="3.2" fill="#dc2a1c" />
<line x1="602.5" y1="303.8" x2="602.5" y2="310.3" stroke="#1e5fc2" stroke-width="1" />
<rect x="601" y="306.2" width="3" height="3.2" fill="#1e5fc2" />
<line x1="606.5" y1="307.8" x2="606.5" y2="315.9" stroke="#1e5fc2" stroke-width="1" />
<rect x="605" y="308.6" width="3" height="4.0" fill="#1e5fc2" />
<line x1="610.5" y1="309.5" x2="610.5" y2="319.1" stroke="#1e5fc2" stroke-width="1" />
<rect x="609" y="311.9" width="3" height="2.4" fill="#1e5fc2" />
<line x1="615.5" y1="305.4" x2="615.5" y2="314.3" stroke="#dc2a1c" stroke-width="1" />
<rect x="614" y="307.0" width="3" height="4.8" fill="#dc2a1c" />
<line x1="619.5" y1="302.2" x2="619.5" y2="310.3" stroke="#1e5fc2" stroke-width="1" />
<rect x="618" y="304.6" width="3" height="4.8" fill="#1e5fc2" />
<line x1="623.5" y1="307.8" x2="623.5" y2="317.5" stroke="#1e5fc2" stroke-width="1" />
<rect x="622" y="308.6" width="3" height="6.4" fill="#1e5fc2" />
<line x1="628.5" y1="311.1" x2="628.5" y2="316.7" stroke="#dc2a1c" stroke-width="1" />
<rect x="627" y="312.2" width="3" height="2.1" fill="#dc2a1c" />
<line x1="632.5" y1="316.7" x2="632.5" y2="321.5" stroke="#1e5fc2" stroke-width="1" />
<rect x="631" y="316.7" width="3" height="4.0" fill="#1e5fc2" />
<line x1="636.5" y1="319.9" x2="636.5" y2="324.8" stroke="#dc2a1c" stroke-width="1" />
<rect x="635" y="320.7" width="3" height="3.2" fill="#dc2a1c" />
<line x1="641.5" y1="315.9" x2="641.5" y2="321.5" stroke="#dc2a1c" stroke-width="1" />
<rect x="640" y="317.5" width="3" height="3.2" fill="#dc2a1c" />
<line x1="645.5" y1="315.9" x2="645.5" y2="322.3" stroke="#1e5fc2" stroke-width="1" />
<rect x="644" y="318.3" width="3" height="3.2" fill="#1e5fc2" />
<line x1="649.5" y1="321.5" x2="649.5" y2="328.8" stroke="#1e5fc2" stroke-width="1" />
<rect x="648" y="322.3" width="3" height="4.8" fill="#1e5fc2" />
<line x1="653.5" y1="323.9" x2="653.5" y2="331.2" stroke="#dc2a1c" stroke-width="1" />
<rect x="652" y="324.8" width="3" height="4.8" fill="#dc2a1c" />
<line x1="658.5" y1="320.7" x2="658.5" y2="326.4" stroke="#dc2a1c" stroke-width="1" />
<rect x="657" y="321.5" width="3" height="4.0" fill="#dc2a1c" />
<line x1="662.5" y1="319.9" x2="662.5" y2="329.6" stroke="#1e5fc2" stroke-width="1" />
<rect x="661" y="320.7" width="3" height="7.2" fill="#1e5fc2" />
<line x1="666.5" y1="328.8" x2="666.5" y2="332.0" stroke="#1e5fc2" stroke-width="1" />
<rect x="665" y="329.3" width="3" height="1.9" fill="#1e5fc2" />
<line x1="671.5" y1="328.8" x2="671.5" y2="334.4" stroke="#dc2a1c" stroke-width="1" />
<rect x="670" y="329.6" width="3" height="2.4" fill="#dc2a1c" />
<line x1="675.5" y1="328.0" x2="675.5" y2="336.8" stroke="#dc2a1c" stroke-width="1" />
<rect x="674" y="328.8" width="3" height="4.0" fill="#dc2a1c" />
<line x1="679.5" y1="327.2" x2="679.5" y2="331.2" stroke="#dc2a1c" stroke-width="1" />
<rect x="678" y="328.0" width="3" height="2.4" fill="#dc2a1c" />
<line x1="684.5" y1="323.9" x2="684.5" y2="332.0" stroke="#1e5fc2" stroke-width="1" />
<rect x="683" y="328.8" width="3" height="2.4" fill="#1e5fc2" />
<line x1="688.5" y1="320.7" x2="688.5" y2="328.8" stroke="#dc2a1c" stroke-width="1" />
<rect x="687" y="321.5" width="3" height="6.4" fill="#dc2a1c" />
<line x1="692.5" y1="314.3" x2="692.5" y2="322.3" stroke="#dc2a1c" stroke-width="1" />
<rect x="691" y="315.1" width="3" height="4.8" fill="#dc2a1c" />
<line x1="697.5" y1="312.7" x2="697.5" y2="319.9" stroke="#1e5fc2" stroke-width="1" />
<rect x="696" y="313.2" width="3" height="1.9" fill="#1e5fc2" />
<line x1="701.5" y1="313.5" x2="701.5" y2="319.9" stroke="#1e5fc2" stroke-width="1" />
<rect x="700" y="315.1" width="3" height="4.0" fill="#1e5fc2" />
<line x1="705.5" y1="316.7" x2="705.5" y2="320.7" stroke="#1e5fc2" stroke-width="1" />
<rect x="704" y="317.5" width="3" height="2.4" fill="#1e5fc2" />
<line x1="710.5" y1="319.1" x2="710.5" y2="323.1" stroke="#1e5fc2" stroke-width="1" />
<rect x="709" y="319.9" width="3" height="2.4" fill="#1e5fc2" />
<line x1="714.5" y1="318.3" x2="714.5" y2="323.1" stroke="#dc2a1c" stroke-width="1" />
<rect x="713" y="319.1" width="3" height="2.4" fill="#dc2a1c" />
<line x1="718.5" y1="315.1" x2="718.5" y2="323.9" stroke="#1e5fc2" stroke-width="1" />
<rect x="717" y="316.7" width="3" height="3.2" fill="#1e5fc2" />
<line x1="723.5" y1="314.3" x2="723.5" y2="324.8" stroke="#dc2a1c" stroke-width="1" />
<rect x="722" y="315.1" width="3" height="5.6" fill="#dc2a1c" />
<line x1="727.5" y1="316.7" x2="727.5" y2="325.6" stroke="#1e5fc2" stroke-width="1" />
<rect x="726" y="319.1" width="3" height="5.6" fill="#1e5fc2" />
<line x1="731.5" y1="324.5" x2="731.5" y2="330.8" stroke="#1e5fc2" stroke-width="1" />
<rect x="730" y="325.0" width="3" height="3.9" fill="#1e5fc2" />
<line x1="735.5" y1="326.9" x2="735.5" y2="333.2" stroke="#1e5fc2" stroke-width="1" />
<rect x="734" y="327.9" width="3" height="3.4" fill="#1e5fc2" />
<line x1="740.5" y1="326.4" x2="740.5" y2="331.7" stroke="#1e5fc2" stroke-width="1" />
<rect x="739" y="327.4" width="3" height="2.9" fill="#1e5fc2" />
<line x1="744.5" y1="327.4" x2="744.5" y2="333.7" stroke="#1e5fc2" stroke-width="1" />
<rect x="743" y="328.9" width="3" height="3.4" fill="#1e5fc2" />
<line x1="748.5" y1="329.3" x2="748.5" y2="337.5" stroke="#dc2a1c" stroke-width="1" />
<rect x="747" y="329.8" width="3" height="3.4" fill="#dc2a1c" />
<line x1="753.5" y1="326.9" x2="753.5" y2="333.7" stroke="#dc2a1c" stroke-width="1" />
<rect x="752" y="329.3" width="3" height="2.9" fill="#dc2a1c" />
<line x1="757.5" y1="329.8" x2="757.5" y2="340.9" stroke="#1e5fc2" stroke-width="1" />
<rect x="756" y="330.8" width="3" height="6.8" fill="#1e5fc2" />
<line x1="761.5" y1="332.2" x2="761.5" y2="337.1" stroke="#dc2a1c" stroke-width="1" />
<rect x="760" y="332.7" width="3" height="3.9" fill="#dc2a1c" />
<line x1="766.5" y1="333.2" x2="766.5" y2="341.9" stroke="#1e5fc2" stroke-width="1" />
<rect x="765" y="334.6" width="3" height="5.3" fill="#1e5fc2" />
<line x1="770.5" y1="326.9" x2="770.5" y2="335.6" stroke="#dc2a1c" stroke-width="1" />
<rect x="769" y="328.4" width="3" height="6.3" fill="#dc2a1c" />
<line x1="774.5" y1="324.5" x2="774.5" y2="331.3" stroke="#dc2a1c" stroke-width="1" />
<rect x="773" y="325.0" width="3" height="3.9" fill="#dc2a1c" />
<line x1="779.5" y1="323.1" x2="779.5" y2="328.9" stroke="#1e5fc2" stroke-width="1" />
<rect x="778" y="324.5" width="3" height="2.4" fill="#1e5fc2" />
<line x1="783.5" y1="315.8" x2="783.5" y2="326.0" stroke="#dc2a1c" stroke-width="1" />
<rect x="782" y="316.8" width="3" height="8.2" fill="#dc2a1c" />
<line x1="787.5" y1="314.8" x2="787.5" y2="320.2" stroke="#1e5fc2" stroke-width="1" />
<rect x="786" y="317.3" width="3" height="2.4" fill="#1e5fc2" />
<line x1="792.5" y1="314.8" x2="792.5" y2="320.2" stroke="#dc2a1c" stroke-width="1" />
<rect x="791" y="315.3" width="3" height="4.3" fill="#dc2a1c" />
<line x1="796.5" y1="312.9" x2="796.5" y2="316.8" stroke="#dc2a1c" stroke-width="1" />
<rect x="795" y="313.9" width="3" height="2.4" fill="#dc2a1c" />
<line x1="800.5" y1="312.9" x2="800.5" y2="317.3" stroke="#1e5fc2" stroke-width="1" />
<rect x="799" y="313.9" width="3" height="2.4" fill="#1e5fc2" />
<line x1="805.5" y1="315.3" x2="805.5" y2="326.0" stroke="#1e5fc2" stroke-width="1" />
<rect x="804" y="316.3" width="3" height="7.7" fill="#1e5fc2" />
<line x1="809.5" y1="317.3" x2="809.5" y2="319.7" stroke="#dc2a1c" stroke-width="1" />
<rect x="808" y="317.7" width="3" height="1.4" fill="#dc2a1c" />
<line x1="813.5" y1="320.5" x2="813.5" y2="327.0" stroke="#1e5fc2" stroke-width="1" />
<rect x="812" y="321.3" width="3" height="4.0" fill="#1e5fc2" />
<line x1="818.5" y1="318.1" x2="818.5" y2="324.5" stroke="#dc2a1c" stroke-width="1" />
<rect x="817" y="318.9" width="3" height="5.6" fill="#dc2a1c" />
<line x1="822.5" y1="311.7" x2="822.5" y2="318.9" stroke="#dc2a1c" stroke-width="1" />
<rect x="821" y="312.5" width="3" height="5.6" fill="#dc2a1c" />
<line x1="826.5" y1="302.0" x2="826.5" y2="313.3" stroke="#dc2a1c" stroke-width="1" />
<rect x="825" y="303.6" width="3" height="7.2" fill="#dc2a1c" />
<line x1="830.5" y1="304.4" x2="830.5" y2="311.7" stroke="#1e5fc2" stroke-width="1" />
<rect x="829" y="304.4" width="3" height="6.4" fill="#1e5fc2" />
<line x1="835.5" y1="303.6" x2="835.5" y2="311.7" stroke="#dc2a1c" stroke-width="1" />
<rect x="834" y="305.2" width="3" height="5.6" fill="#dc2a1c" />
<line x1="839.5" y1="301.2" x2="839.5" y2="306.8" stroke="#dc2a1c" stroke-width="1" />
<rect x="838" y="303.6" width="3" height="2.4" fill="#dc2a1c" />
<line x1="843.5" y1="297.2" x2="843.5" y2="306.0" stroke="#dc2a1c" stroke-width="1" />
<rect x="842" y="302.8" width="3" height="2.4" fill="#dc2a1c" />
<line x1="848.5" y1="298.8" x2="848.5" y2="306.8" stroke="#1e5fc2" stroke-width="1" />
<rect x="847" y="301.2" width="3" height="4.8" fill="#1e5fc2" />
<line x1="852.5" y1="297.2" x2="852.5" y2="303.6" stroke="#dc2a1c" stroke-width="1" />
<rect x="851" y="299.6" width="3" height="3.2" fill="#dc2a1c" />
<line x1="856.5" y1="293.9" x2="856.5" y2="302.8" stroke="#dc2a1c" stroke-width="1" />
<rect x="855" y="296.4" width="3" height="5.6" fill="#dc2a1c" />
<line x1="861.5" y1="291.5" x2="861.5" y2="298.0" stroke="#dc2a1c" stroke-width="1" />
<rect x="860" y="292.3" width="3" height="4.8" fill="#dc2a1c" />
<line x1="865.5" y1="281.1" x2="865.5" y2="291.5" stroke="#1e5fc2" stroke-width="1" />
<rect x="864" y="285.9" width="3" height="2.4" fill="#1e5fc2" />
<line x1="869.5" y1="283.5" x2="869.5" y2="289.1" stroke="#dc2a1c" stroke-width="1" />
<rect x="868" y="284.3" width="3" height="4.0" fill="#dc2a1c" />
<line x1="874.5" y1="284.3" x2="874.5" y2="289.9" stroke="#1e5fc2" stroke-width="1" />
<rect x="873" y="285.1" width="3" height="4.0" fill="#1e5fc2" />
<line x1="878.5" y1="280.3" x2="878.5" y2="286.7" stroke="#1e5fc2" stroke-width="1" />
<rect x="877" y="281.1" width="3" height="4.8" fill="#1e5fc2" />
<line x1="882.5" y1="281.1" x2="882.5" y2="285.9" stroke="#dc2a1c" stroke-width="1" />
<rect x="881" y="281.5" width="3" height="3.5" fill="#dc2a1c" />
<line x1="887.5" y1="276.2" x2="887.5" y2="286.7" stroke="#1e5fc2" stroke-width="1" />
<rect x="886" y="279.5" width="3" height="4.0" fill="#1e5fc2" />
<line x1="891.5" y1="278.6" x2="891.5" y2="289.9" stroke="#1e5fc2" stroke-width="1" />
<rect x="890" y="280.3" width="3" height="4.0" fill="#1e5fc2" />
<line x1="895.5" y1="277.0" x2="895.5" y2="283.5" stroke="#1e5fc2" stroke-width="1" />
<rect x="894" y="278.6" width="3" height="4.0" fill="#1e5fc2" />
<line x1="900.5" y1="277.8" x2="900.5" y2="282.7" stroke="#dc2a1c" stroke-width="1" />
<rect x="899" y="278.6" width="3" height="3.2" fill="#dc2a1c" />
<line x1="904.5" y1="272.9" x2="904.5" y2="285.0" stroke="#1e5fc2" stroke-width="1" />
<rect x="903" y="277.8" width="3" height="5.6" fill="#1e5fc2" />
<line x1="908.5" y1="261.7" x2="908.5" y2="282.6" stroke="#dc2a1c" stroke-width="1" />
<rect x="907" y="273.7" width="3" height="8.1" fill="#dc2a1c" />
<line x1="912.5" y1="270.2" x2="912.5" y2="280.2" stroke="#1e5fc2" stroke-width="1" />
<rect x="911" y="275.3" width="3" height="3.2" fill="#1e5fc2" />
<line x1="917.5" y1="265.7" x2="917.5" y2="277.8" stroke="#dc2a1c" stroke-width="1" />
<rect x="916" y="268.9" width="3" height="8.1" fill="#dc2a1c" />
<line x1="921.5" y1="261.7" x2="921.5" y2="270.5" stroke="#1e5fc2" stroke-width="1" />
<rect x="920" y="262.5" width="3" height="4.8" fill="#1e5fc2" />
<line x1="925.5" y1="263.3" x2="925.5" y2="268.9" stroke="#1e5fc2" stroke-width="1" />
<rect x="924" y="264.9" width="3" height="1.6" fill="#1e5fc2" />
<line x1="930.5" y1="260.0" x2="930.5" y2="268.1" stroke="#dc2a1c" stroke-width="1" />
<rect x="929" y="260.9" width="3" height="6.4" fill="#dc2a1c" />
<line x1="934.5" y1="255.2" x2="934.5" y2="263.3" stroke="#dc2a1c" stroke-width="1" />
<rect x="933" y="257.6" width="3" height="3.2" fill="#dc2a1c" />
<line x1="938.5" y1="252.8" x2="938.5" y2="260.0" stroke="#1e5fc2" stroke-width="1" />
<rect x="937" y="256.0" width="3" height="2.4" fill="#1e5fc2" />
<line x1="943.5" y1="254.4" x2="943.5" y2="260.9" stroke="#1e5fc2" stroke-width="1" />
<rect x="942" y="256.8" width="3" height="3.2" fill="#1e5fc2" />
<line x1="947.5" y1="256.0" x2="947.5" y2="262.5" stroke="#1e5fc2" stroke-width="1" />
<rect x="946" y="256.8" width="3" height="3.2" fill="#1e5fc2" />
<line x1="951.5" y1="231.1" x2="951.5" y2="258.4" stroke="#dc2a1c" stroke-width="1" />
<rect x="950" y="231.9" width="3" height="25.8" fill="#dc2a1c" />
<line x1="956.5" y1="226.2" x2="956.5" y2="239.1" stroke="#1e5fc2" stroke-width="1" />
<rect x="955" y="231.9" width="3" height="4.0" fill="#1e5fc2" />
<line x1="960.5" y1="220.6" x2="960.5" y2="237.5" stroke="#dc2a1c" stroke-width="1" />
<rect x="959" y="222.2" width="3" height="14.5" fill="#dc2a1c" />
<line x1="964.5" y1="210.1" x2="964.5" y2="224.6" stroke="#dc2a1c" stroke-width="1" />
<rect x="963" y="213.3" width="3" height="10.5" fill="#dc2a1c" />
<line x1="969.5" y1="206.1" x2="969.5" y2="218.2" stroke="#1e5fc2" stroke-width="1" />
<rect x="968" y="209.3" width="3" height="6.4" fill="#1e5fc2" />
<line x1="973.5" y1="212.5" x2="973.5" y2="218.2" stroke="#dc2a1c" stroke-width="1" />
<rect x="972" y="214.2" width="3" height="2.4" fill="#dc2a1c" />
<line x1="977.5" y1="209.3" x2="977.5" y2="219.0" stroke="#1e5fc2" stroke-width="1" />
<rect x="976" y="211.7" width="3" height="4.8" fill="#1e5fc2" />
<line x1="982.5" y1="207.3" x2="982.5" y2="222.6" stroke="#dc2a1c" stroke-width="1" />
<rect x="981" y="208.1" width="3" height="8.1" fill="#dc2a1c" />
<line x1="986.5" y1="204.9" x2="986.5" y2="213.7" stroke="#dc2a1c" stroke-width="1" />
<rect x="985" y="207.3" width="3" height="2.4" fill="#dc2a1c" />
<line x1="990.5" y1="201.7" x2="990.5" y2="211.3" stroke="#1e5fc2" stroke-width="1" />
<rect x="989" y="205.7" width="3" height="4.8" fill="#1e5fc2" />
<line x1="994.5" y1="193.6" x2="994.5" y2="212.1" stroke="#dc2a1c" stroke-width="1" />
<rect x="993" y="197.6" width="3" height="12.9" fill="#dc2a1c" />
<line x1="999.5" y1="179.9" x2="999.5" y2="199.2" stroke="#dc2a1c" stroke-width="1" />
<rect x="998" y="185.6" width="3" height="12.9" fill="#dc2a1c" />
<line x1="1003.5" y1="180.7" x2="1003.5" y2="205.7" stroke="#1e5fc2" stroke-width="1" />
<rect x="1002" y="185.6" width="3" height="4.8" fill="#1e5fc2" />
<line x1="1007.5" y1="185.6" x2="1007.5" y2="200.0" stroke="#1e5fc2" stroke-width="1" />
<rect x="1006" y="186.4" width="3" height="12.9" fill="#1e5fc2" />
<line x1="1012.5" y1="185.6" x2="1012.5" y2="208.9" stroke="#1e5fc2" stroke-width="1" />
<rect x="1011" y="195.2" width="3" height="4.0" fill="#1e5fc2" />
<line x1="1016.5" y1="194.4" x2="1016.5" y2="208.9" stroke="#1e5fc2" stroke-width="1" />
<rect x="1015" y="195.2" width="3" height="1.6" fill="#1e5fc2" />
<line x1="1020.5" y1="177.5" x2="1020.5" y2="202.5" stroke="#dc2a1c" stroke-width="1" />
<rect x="1019" y="179.1" width="3" height="21.7" fill="#dc2a1c" />
<line x1="1025.5" y1="177.5" x2="1025.5" y2="205.7" stroke="#1e5fc2" stroke-width="1" />
<rect x="1024" y="179.1" width="3" height="8.1" fill="#1e5fc2" />
<line x1="1029.5" y1="171.9" x2="1029.5" y2="186.4" stroke="#dc2a1c" stroke-width="1" />
<rect x="1028" y="175.1" width="3" height="10.5" fill="#dc2a1c" />
<line x1="1033.5" y1="168.6" x2="1033.5" y2="179.9" stroke="#1e5fc2" stroke-width="1" />
<rect x="1032" y="175.1" width="3" height="2.4" fill="#1e5fc2" />
<line x1="1038.5" y1="163.8" x2="1038.5" y2="177.5" stroke="#dc2a1c" stroke-width="1" />
<rect x="1037" y="165.4" width="3" height="11.3" fill="#dc2a1c" />
<line x1="1042.5" y1="157.0" x2="1042.5" y2="177.2" stroke="#dc2a1c" stroke-width="1" />
<rect x="1041" y="160.8" width="3" height="15.5" fill="#dc2a1c" />
<line x1="1046.5" y1="145.4" x2="1046.5" y2="162.8" stroke="#dc2a1c" stroke-width="1" />
<rect x="1045" y="147.3" width="3" height="13.5" fill="#dc2a1c" />
<line x1="1051.5" y1="145.4" x2="1051.5" y2="160.8" stroke="#1e5fc2" stroke-width="1" />
<rect x="1050" y="147.3" width="3" height="5.8" fill="#1e5fc2" />
<line x1="1055.5" y1="142.5" x2="1055.5" y2="165.7" stroke="#1e5fc2" stroke-width="1" />
<rect x="1054" y="147.3" width="3" height="13.5" fill="#1e5fc2" />
<line x1="1059.5" y1="151.2" x2="1059.5" y2="165.7" stroke="#dc2a1c" stroke-width="1" />
<rect x="1058" y="155.0" width="3" height="5.8" fill="#dc2a1c" />
<line x1="1064.5" y1="151.2" x2="1064.5" y2="166.6" stroke="#1e5fc2" stroke-width="1" />
<rect x="1063" y="153.1" width="3" height="7.7" fill="#1e5fc2" />
<line x1="1068.5" y1="150.2" x2="1068.5" y2="160.8" stroke="#dc2a1c" stroke-width="1" />
<rect x="1067" y="153.1" width="3" height="3.9" fill="#dc2a1c" />
<line x1="1072.5" y1="130.9" x2="1072.5" y2="151.2" stroke="#dc2a1c" stroke-width="1" />
<rect x="1071" y="135.7" width="3" height="11.6" fill="#dc2a1c" />
<line x1="1076.5" y1="88.4" x2="1076.5" y2="135.7" stroke="#dc2a1c" stroke-width="1" />
<rect x="1075" y="96.1" width="3" height="37.7" fill="#dc2a1c" />
<line x1="1081.5" y1="68.5" x2="1081.5" y2="104.8" stroke="#dc2a1c" stroke-width="1" />
<rect x="1080" y="92.2" width="3" height="1.2" fill="#dc2a1c" />
<line x1="1085.5" y1="87.4" x2="1085.5" y2="99.0" stroke="#dc2a1c" stroke-width="1" />
<rect x="1084" y="88.4" width="3" height="4.8" fill="#dc2a1c" />
<line x1="1089.5" y1="85.5" x2="1089.5" y2="101.9" stroke="#1e5fc2" stroke-width="1" />
<rect x="1088" y="85.5" width="3" height="16.4" fill="#1e5fc2" />
<line x1="1094.5" y1="99.0" x2="1094.5" y2="120.2" stroke="#1e5fc2" stroke-width="1" />
<rect x="1093" y="104.8" width="3" height="2.3" fill="#1e5fc2" />
<line x1="1098.5" y1="109.6" x2="1098.5" y2="126.0" stroke="#1e5fc2" stroke-width="1" />
<rect x="1097" y="110.6" width="3" height="12.6" fill="#1e5fc2" />
<line x1="1102.5" y1="108.6" x2="1102.5" y2="128.9" stroke="#dc2a1c" stroke-width="1" />
<rect x="1101" y="112.5" width="3" height="13.5" fill="#dc2a1c" />
<line x1="1107.5" y1="89.3" x2="1107.5" y2="110.6" stroke="#dc2a1c" stroke-width="1" />
<rect x="1106" y="89.3" width="3" height="19.3" fill="#dc2a1c" />
<line x1="1111.5" y1="88.4" x2="1111.5" y2="95.1" stroke="#dc2a1c" stroke-width="1" />
<rect x="1110" y="90.3" width="3" height="2.9" fill="#dc2a1c" />
<line x1="1115.5" y1="80.6" x2="1115.5" y2="108.6" stroke="#1e5fc2" stroke-width="1" />
<rect x="1114" y="86.4" width="3" height="20.3" fill="#1e5fc2" />
<line x1="1120.5" y1="104.8" x2="1120.5" y2="120.2" stroke="#1e5fc2" stroke-width="1" />
<rect x="1119" y="105.7" width="3" height="10.6" fill="#1e5fc2" />
<line x1="1124.5" y1="106.7" x2="1124.5" y2="120.2" stroke="#dc2a1c" stroke-width="1" />
<rect x="1123" y="111.5" width="3" height="3.9" fill="#dc2a1c" />
<line x1="1128.5" y1="98.0" x2="1128.5" y2="116.4" stroke="#dc2a1c" stroke-width="1" />
<rect x="1127" y="109.6" width="3" height="1.9" fill="#dc2a1c" />
<line x1="1133.5" y1="84.5" x2="1133.5" y2="111.5" stroke="#dc2a1c" stroke-width="1" />
<rect x="1132" y="104.8" width="3" height="3.9" fill="#dc2a1c" />
<line x1="1137.5" y1="99.0" x2="1137.5" y2="115.4" stroke="#1e5fc2" stroke-width="1" />
<rect x="1136" y="104.8" width="3" height="2.9" fill="#1e5fc2" />
<line x1="1141.5" y1="108.6" x2="1141.5" y2="128.0" stroke="#1e5fc2" stroke-width="1" />
<rect x="1140" y="108.6" width="3" height="12.6" fill="#1e5fc2" />
<line x1="1146.5" y1="115.4" x2="1146.5" y2="128.0" stroke="#1e5fc2" stroke-width="1" />
<rect x="1145" y="120.4" width="3" height="4.8" fill="#1e5fc2" />
</g>
<polyline points="6.0,367.0 10.3,366.7 14.6,366.3 18.9,366.0 23.3,365.7 27.6,365.4 31.9,365.1 36.2,364.8 40.5,364.5 44.8,364.2 49.2,363.9 53.5,363.6 57.8,363.4 62.1,363.1 66.4,362.8 70.7,362.6 75.1,362.3 79.4,362.0 83.7,361.8 88.0,361.5 92.3,361.2 96.6,360.9 101.0,360.7 105.3,360.4 109.6,360.1 113.9,359.9 118.2,359.6 122.5,359.4 126.9,359.1 131.2,358.9 135.5,358.7 139.8,358.4 144.1,358.2 148.4,358.0 152.8,357.8 157.1,357.5 161.4,357.3 165.7,357.1 170.0,356.9 174.3,356.7 178.7,356.5 183.0,356.3 187.3,356.1 191.6,355.9 195.9,355.7 200.2,355.4 204.6,355.1 208.9,354.9 213.2,354.7 217.5,354.6 221.8,354.4 226.1,354.4 230.5,354.4 234.8,354.3 239.1,354.2 243.4,354.1 247.7,353.9 252.0,353.7 256.4,353.5 260.7,353.2 265.0,352.9 269.3,352.7 273.6,352.4 277.9,352.1 282.3,351.9 286.6,351.6 290.9,351.4 295.2,351.2 299.5,351.0 303.8,350.7 308.2,350.5 312.5,350.3 316.8,350.1 321.1,349.9 325.4,349.8 329.7,349.7 334.1,349.5 338.4,349.4 342.7,349.3 347.0,349.2 351.3,349.1 355.6,348.9 360.0,348.7 364.3,348.5 368.6,348.4 372.9,348.3 377.2,348.3 381.5,348.3 385.9,348.3 390.2,348.3 394.5,348.4 398.8,348.4 403.1,348.3 407.4,348.2 411.8,348.0 416.1,347.9 420.4,347.7 424.7,347.5 429.0,347.3 433.3,347.1 437.6,347.0 442.0,346.8 446.3,346.7 450.6,346.6 454.9,346.4 459.2,346.3 463.5,346.2 467.9,346.0 472.2,345.9 476.5,345.7 480.8,345.5 485.1,345.3 489.4,345.2 493.8,345.0 498.1,344.8 502.4,344.6 506.7,344.4 511.0,344.3 515.3,344.2 519.7,344.1 524.0,344.0 528.3,343.9 532.6,343.7 536.9,343.4 541.2,343.0 545.6,342.6 549.9,342.2 554.2,341.7 558.5,341.3 562.8,340.8 567.1,340.4 571.5,339.9 575.8,339.5 580.1,339.0 584.4,338.6 588.7,338.2 593.0,337.7 597.4,337.3 601.7,336.9 606.0,336.4 610.3,336.0 614.6,335.6 618.9,335.2 623.3,334.8 627.6,334.4 631.9,334.1 636.2,333.7 640.5,333.4 644.8,333.1 649.2,332.8 653.5,332.4 657.8,332.0 662.1,331.6 666.4,331.2 670.7,330.8 675.1,330.4 679.4,330.0 683.7,329.5 688.0,329.1 692.3,328.6 696.6,328.2 701.0,327.8 705.3,327.5 709.6,327.2 713.9,326.8 718.2,326.5 722.5,326.3 726.9,326.0 731.2,325.8 735.5,325.5 739.8,325.3 744.1,325.2 748.4,325.1 752.8,325.0 757.1,324.9 761.4,324.9 765.7,324.8 770.0,324.8 774.3,324.7 778.7,324.6 783.0,324.5 787.3,324.4 791.6,324.3 795.9,324.1 800.2,324.0 804.6,323.9 808.9,323.7 813.2,323.5 817.5,323.3 821.8,323.0 826.1,322.8 830.5,322.7 834.8,322.5 839.1,322.4 843.4,322.3 847.7,322.2 852.0,322.2 856.4,322.1 860.7,322.0 865.0,321.8 869.3,321.6 873.6,321.4 877.9,321.1 882.2,320.7 886.6,320.3 890.9,319.8 895.2,319.4 899.5,318.9 903.8,318.3 908.1,317.8 912.5,317.2 916.8,316.7 921.1,316.1 925.4,315.4 929.7,314.8 934.0,314.1 938.4,313.3 942.7,312.6 947.0,311.8 951.3,311.0 955.6,310.2 959.9,309.4 964.3,308.6 968.6,307.7 972.9,306.8 977.2,306.0 981.5,305.0 985.8,304.1 990.2,303.1 994.5,302.1 998.8,301.0 1003.1,299.9 1007.4,298.7 1011.7,297.5 1016.1,296.2 1020.4,294.9 1024.7,293.6 1029.0,292.3 1033.3,291.0 1037.6,289.7 1042.0,288.4 1046.3,287.1 1050.6,285.8 1054.9,284.5 1059.2,283.2 1063.5,281.8 1067.9,280.4 1072.2,278.8 1076.5,277.2 1080.8,275.5 1085.1,273.8 1089.4,272.0 1093.8,270.2 1098.1,268.4 1102.4,266.6 1106.7,264.9 1111.0,263.1 1115.3,261.5 1119.7,259.8 1124.0,258.3 1128.3,256.7 1132.6,255.2 1136.9,253.6 1141.2,252.1 1145.6,250.6" fill="none" stroke="#2f63dd" stroke-width="2.7" stroke-linejoin="round" stroke-linecap="round" shape-rendering="crispEdges"/>
<polyline points="6.0,347.7 10.3,347.7 14.6,347.7 18.9,347.7 23.3,347.7 27.6,347.7 31.9,347.7 36.2,347.7 40.5,347.7 44.8,347.7 49.2,347.7 53.5,347.8 57.8,347.8 62.1,347.9 66.4,348.0 70.7,348.2 75.1,348.4 79.4,348.8 83.7,349.3 88.0,349.9 92.3,350.5 96.6,351.0 101.0,351.6 105.3,352.1 109.6,352.5 113.9,353.0 118.2,353.4 122.5,353.8 126.9,354.2 131.2,354.5 135.5,354.8 139.8,355.0 144.1,355.3 148.4,355.6 152.8,356.0 157.1,356.5 161.4,357.0 165.7,357.5 170.0,358.1 174.3,358.5 178.7,358.8 183.0,359.1 187.3,359.2 191.6,359.2 195.9,359.2 200.2,359.3 204.6,359.4 208.9,359.4 213.2,359.5 217.5,359.5 221.8,359.4 226.1,359.3 230.5,359.1 234.8,358.9 239.1,358.7 243.4,358.6 247.7,358.5 252.0,358.4 256.4,358.4 260.7,358.4 265.0,358.3 269.3,358.1 273.6,357.9 277.9,357.7 282.3,357.4 286.6,357.2 290.9,357.0 295.2,356.8 299.5,356.6 303.8,356.4 308.2,356.1 312.5,355.7 316.8,355.2 321.1,354.6 325.4,353.7 329.7,352.6 334.1,351.4 338.4,350.2 342.7,348.9 347.0,347.7 351.3,346.8 355.6,346.0 360.0,345.3 364.3,344.8 368.6,344.4 372.9,344.1 377.2,343.9 381.5,343.6 385.9,343.4 390.2,343.1 394.5,342.7 398.8,342.3 403.1,341.7 407.4,341.0 411.8,340.2 416.1,339.4 420.4,338.5 424.7,337.6 429.0,336.7 433.3,335.9 437.6,335.1 442.0,334.4 446.3,333.7 450.6,333.1 454.9,332.5 459.2,332.0 463.5,331.7 467.9,331.4 472.2,331.3 476.5,331.2 480.8,331.2 485.1,331.2 489.4,331.1 493.8,331.1 498.1,331.0 502.4,330.9 506.7,330.7 511.0,330.6 515.3,330.4 519.7,330.0 524.0,329.6 528.3,328.9 532.6,328.2 536.9,327.5 541.2,326.9 545.6,326.4 549.9,326.0 554.2,325.7 558.5,325.5 562.8,325.3 567.1,325.2 571.5,325.0 575.8,324.9 580.1,324.8 584.4,324.7 588.7,324.6 593.0,324.4 597.4,324.3 601.7,324.2 606.0,324.0 610.3,323.9 614.6,323.7 618.9,323.5 623.3,323.3 627.6,323.1 631.9,323.0 636.2,322.9 640.5,322.8 644.8,322.7 649.2,322.6 653.5,322.5 657.8,322.4 662.1,322.3 666.4,322.3 670.7,322.3 675.1,322.3 679.4,322.2 683.7,322.1 688.0,322.0 692.3,321.9 696.6,321.8 701.0,321.6 705.3,321.5 709.6,321.2 713.9,321.0 718.2,320.8 722.5,320.6 726.9,320.5 731.2,320.5 735.5,320.5 739.8,320.5 744.1,320.5 748.4,320.5 752.8,320.5 757.1,320.6 761.4,320.6 765.7,320.7 770.0,320.7 774.3,320.8 778.7,320.8 783.0,320.9 787.3,320.9 791.6,320.9 795.9,320.9 800.2,320.9 804.6,320.9 808.9,320.9 813.2,320.9 817.5,320.9 821.8,320.8 826.1,320.7 830.5,320.6 834.8,320.4 839.1,320.1 843.4,319.9 847.7,319.6 852.0,319.3 856.4,318.9 860.7,318.6 865.0,318.3 869.3,317.9 873.6,317.6 877.9,317.2 882.2,316.7 886.6,316.1 890.9,315.5 895.2,314.7 899.5,314.0 903.8,313.2 908.1,312.3 912.5,311.4 916.8,310.5 921.1,309.5 925.4,308.5 929.7,307.4 934.0,306.3 938.4,305.1 942.7,303.8 947.0,302.5 951.3,301.1 955.6,299.6 959.9,298.1 964.3,296.5 968.6,295.0 972.9,293.4 977.2,291.7 981.5,290.1 985.8,288.4 990.2,286.7 994.5,284.8 998.8,282.9 1003.1,280.7 1007.4,278.5 1011.7,276.0 1016.1,273.4 1020.4,270.7 1024.7,268.0 1029.0,265.2 1033.3,262.4 1037.6,259.6 1042.0,256.8 1046.3,254.0 1050.6,251.1 1054.9,248.2 1059.2,245.2 1063.5,242.2 1067.9,239.2 1072.2,236.1 1076.5,233.1 1080.8,230.0 1085.1,226.9 1089.4,223.8 1093.8,220.7 1098.1,217.7 1102.4,214.6 1106.7,211.7 1111.0,208.7 1115.3,205.7 1119.7,202.7 1124.0,199.6 1128.3,196.5 1132.6,193.3 1136.9,190.2 1141.2,187.1 1145.5,184.0" fill="none" stroke="#1e9638" stroke-width="2.7" stroke-linejoin="round" stroke-linecap="round" shape-rendering="crispEdges"/>
<polyline points="6.4,341.0 10.7,342.1 15.0,343.2 19.3,344.3 23.7,345.5 28.0,346.7 32.3,347.9 36.6,349.1 40.9,349.9 45.2,350.4 49.6,350.6 53.9,350.8 58.2,351.1 62.5,351.6 66.8,352.4 71.1,353.3 75.5,354.5 79.8,356.0 84.1,357.5 88.4,359.0 92.7,360.4 97.0,361.8 101.4,363.0 105.7,363.9 110.0,364.3 114.3,364.1 118.6,363.6 122.9,363.2 127.3,362.9 131.6,362.6 135.9,362.6 140.2,362.7 144.5,362.9 148.8,363.5 153.2,364.4 157.5,365.2 161.8,365.6 166.1,365.7 170.4,365.9 174.7,366.4 179.1,366.9 183.4,367.2 187.7,367.1 192.0,366.8 196.3,366.2 200.6,365.4 205.0,364.5 209.3,363.5 213.6,362.6 217.9,361.5 222.2,360.3 226.5,358.9 230.9,357.5 235.2,356.1 239.5,354.8 243.8,353.5 248.1,352.1 252.4,350.8 256.8,349.4 261.1,348.1 265.4,346.8 269.7,345.5 274.0,344.2 278.3,343.2 282.7,342.3 287.0,341.6 291.3,341.1 295.6,340.6 299.9,340.1 304.2,339.6 308.6,338.9 312.9,338.0 317.2,336.9 321.5,335.7 325.8,334.4 330.1,333.0 334.5,331.6 338.8,330.1 343.1,328.6 347.4,327.1 351.7,325.8 356.0,324.7 360.4,323.8 364.7,323.0 369.0,322.6 373.3,322.5 377.6,322.8 381.9,323.4 386.3,324.0 390.6,324.6 394.9,325.2 399.2,325.7 403.5,326.3 407.8,326.8 412.2,327.4 416.5,327.9 420.8,328.4 425.1,329.0 429.4,329.6 433.7,330.1 438.0,330.4 442.4,330.4 446.7,330.4 451.0,330.3 455.3,330.1 459.6,329.8 463.9,329.5 468.3,329.2 472.6,328.9 476.9,328.9 481.2,329.1 485.5,329.4 489.8,329.7 494.2,330.0 498.5,330.3 502.8,330.4 507.1,330.4 511.4,330.4 515.7,330.4 520.1,330.3 524.4,330.2 528.7,330.0 533.0,329.7 537.3,329.1 541.6,328.3 546.0,327.3 550.3,326.2 554.6,325.1 558.9,323.9 563.2,322.5 567.5,321.1 571.9,319.6 576.2,318.2 580.5,317.0 584.8,315.9 589.1,314.8 593.4,313.7 597.8,312.6 602.1,311.5 606.4,310.6 610.7,309.7 615.0,309.3 619.3,309.3 623.7,309.8 628.0,310.4 632.3,311.0 636.6,311.5 640.9,312.1 645.2,312.6 649.6,313.1 653.9,313.8 658.2,314.5 662.5,315.3 666.8,316.3 671.1,317.4 675.5,318.4 679.8,319.4 684.1,320.3 688.4,321.1 692.7,321.8 697.0,322.4 701.4,322.9 705.7,323.1 710.0,323.1 714.3,323.1 718.6,323.1 722.9,323.1 727.3,323.2 731.6,323.3 735.9,323.6 740.2,324.1 744.5,324.7 748.8,325.3 753.2,325.9 757.5,326.3 761.8,326.7 766.1,327.0 770.4,327.3 774.7,327.6 779.1,327.8 783.4,328.0 787.7,328.1 792.0,328.1 796.3,328.1 800.6,328.0 805.0,327.7 809.3,327.4 813.6,326.8 817.9,325.9 822.2,324.4 826.5,322.5 830.9,320.6 835.2,318.9 839.5,317.5 843.8,316.1 848.1,314.6 852.4,313.2 856.8,311.8 861.1,310.3 865.4,308.9 869.7,307.5 874.0,306.0 878.3,304.6 882.6,303.2 887.0,301.5 891.3,299.3 895.6,296.9 899.9,294.8 904.2,292.8 908.5,290.3 912.9,287.7 917.2,285.4 921.5,283.7 925.8,282.1 930.1,280.4 934.4,278.7 938.8,276.8 943.1,274.9 947.4,272.7 951.7,270.1 956.0,267.1 960.3,263.6 964.7,260.0 969.0,256.5 973.3,253.0 977.6,249.6 981.9,246.1 986.2,242.7 990.6,239.1 994.9,235.4 999.2,231.5 1003.5,227.4 1007.8,223.2 1012.1,218.9 1016.5,214.8 1020.8,211.2 1025.1,207.7 1029.4,204.3 1033.7,200.8 1038.0,197.4 1042.4,194.0 1046.7,190.6 1051.0,187.4 1055.3,184.1 1059.6,180.9 1063.9,177.5 1068.3,173.7 1072.6,169.5 1076.9,164.7 1081.2,159.5 1085.5,154.3 1089.8,149.2 1094.2,144.4 1098.5,140.0 1102.8,135.9 1107.1,132.1 1111.4,128.9 1115.7,126.0 1120.1,123.3 1124.4,120.7 1128.7,118.4 1133.0,116.2 1137.3,114.1 1141.6,112.5 1145.5,111.5" fill="none" stroke="#ffff2e" stroke-width="2.7" stroke-linejoin="round" stroke-linecap="round" shape-rendering="crispEdges"/>
<polyline points="6.4,340.0 16.8,343.0 25.8,345.0 38.7,351.0 51.5,354.0 64.4,357.4 72.2,362.5 79.9,366.4 90.2,369.6 100.5,369.6 109.5,367.7 116.0,363.8 122.4,361.2 128.9,360.0 141.8,360.6 150.0,360.9 159.7,365.7 169.3,369.7 182.2,370.5 191.9,368.9 201.5,364.1 211.2,358.4 220.9,354.4 233.7,352.0 246.6,348.8 259.5,343.9 270.8,339.9 278.8,338.3 294.9,338.0 311.0,336.7 320.7,333.5 330.3,328.6 340.0,323.1 348.0,319.1 356.1,316.7 365.8,317.5 375.4,318.3 383.5,323.1 391.5,327.2 399.6,331.2 407.6,333.6 415.7,333.6 423.7,332.0 433.4,330.4 443.1,328.8 452.7,327.2 462.4,326.4 472.0,328.0 481.7,331.2 491.4,334.4 501.0,335.2 510.7,334.4 520.4,332.8 530.0,328.8 539.7,325.6 549.3,320.7 559.0,316.7 568.6,315.1 578.3,311.9 588.0,308.6 597.6,307.8 607.3,308.3 617.0,308.6 626.6,310.3 636.3,312.7 645.9,315.9 655.6,319.1 665.3,323.1 674.9,326.4 684.6,326.4 694.3,325.6 703.9,323.9 713.6,320.7 720.0,321.7 729.7,323.3 739.3,325.7 749.0,327.3 758.6,328.1 766.7,331.3 774.8,332.1 784.4,329.7 794.1,326.5 803.7,324.1 813.4,323.3 823.1,319.2 832.7,316.0 842.4,312.0 852.1,308.0 861.7,303.1 871.4,297.5 881.0,291.9 890.7,287.0 900.4,283.8 910.3,280.8 920.6,276.9 930.9,271.8 941.2,266.6 949.0,262.7 956.7,253.7 964.4,243.4 972.2,234.4 979.9,226.6 987.6,218.9 995.4,212.5 1003.1,206.0 1010.8,203.5 1018.6,199.6 1026.3,194.4 1034.0,188.0 1041.8,181.5 1047.7,175.3 1055.5,167.6 1063.2,162.8 1070.9,157.9 1076.7,151.2 1081.5,141.5 1086.4,131.8 1092.2,125.1 1098.0,119.3 1103.8,113.5 1107.6,107.7 1112.5,102.9 1117.3,102.9 1123.1,103.8 1128.9,105.7 1134.7,107.7 1140.5,107.7 1145.5,107.7" fill="none" stroke="#f6981e" stroke-width="2.7" stroke-linejoin="round" stroke-linecap="round" shape-rendering="crispEdges"/>
<polyline points="6.4,339.3 12.9,342.6 16.8,343.8 25.8,350.3 33.5,351.6 43.8,353.5 51.5,356.7 60.6,360.0 68.3,367.0 74.7,370.9 79.9,372.8 87.6,370.9 95.4,369.6 100.5,365.1 109.5,362.5 113.4,358.7 122.4,354.8 127.6,356.1 134.0,361.0 141.8,366.4 150.0,368.1 159.7,370.5 170.9,373.7 180.6,372.9 187.0,367.3 193.5,362.5 199.9,359.2 204.8,355.2 214.4,352.0 225.7,350.4 235.3,349.6 246.6,345.6 254.7,342.3 262.7,338.3 269.2,336.7 278.8,337.0 286.9,337.5 298.1,337.5 307.8,336.7 317.5,331.9 327.1,324.6 335.2,319.8 340.0,316.7 346.4,313.5 352.9,313.5 359.3,315.9 365.8,319.9 372.2,322.3 378.6,327.2 385.1,330.4 391.5,333.6 398.0,336.0 404.4,336.0 409.2,332.0 415.7,331.2 423.7,330.4 430.2,330.4 436.6,328.8 444.7,326.4 452.7,325.6 459.2,326.4 465.6,329.6 472.0,332.0 478.5,334.4 484.9,337.6 491.4,336.0 497.8,333.6 504.3,332.0 510.7,331.2 517.1,330.9 523.6,329.9 530.0,326.4 536.4,321.5 542.9,318.3 549.3,314.3 557.4,312.7 563.8,313.5 570.3,313.5 576.7,310.3 583.1,307.8 589.6,306.2 596.0,307.4 602.5,308.6 608.9,309.5 615.3,309.5 621.8,309.5 628.2,312.7 634.7,315.1 641.1,318.3 647.6,320.7 654.0,323.9 660.4,324.8 666.9,326.4 673.3,328.8 678.1,328.8 683.0,326.4 687.8,323.1 692.6,320.7 699.1,318.3 707.1,318.3 715.2,319.1 720.0,320.9 726.4,323.3 732.9,325.7 739.3,328.1 745.8,329.7 752.2,330.5 758.6,332.9 765.1,334.5 771.5,333.7 776.4,328.9 781.2,325.7 786.0,321.7 790.9,317.6 795.7,316.0 800.5,316.0 805.3,319.2 811.8,322.5 816.6,321.7 821.4,318.4 826.3,315.2 831.1,312.8 835.9,309.6 840.8,306.4 847.2,305.6 853.6,303.1 860.1,299.1 866.5,293.5 873.0,289.5 879.4,286.2 885.9,284.1 892.3,283.5 898.7,281.4 903.0,281.0 907.7,279.5 915.5,275.6 923.2,270.5 930.9,265.3 938.7,261.4 946.4,258.9 951.5,256.3 955.4,248.6 959.3,240.8 964.4,230.5 969.6,222.8 974.7,217.6 979.9,213.8 985.1,212.5 990.2,211.2 995.4,207.3 1000.5,200.9 1005.7,197.5 1010.8,197.5 1016.0,196.5 1021.1,194.4 1026.3,190.6 1031.4,184.1 1036.6,179.0 1041.9,174.3 1047.7,166.6 1053.5,160.8 1059.3,157.9 1065.1,157.0 1069.0,155.0 1072.9,151.2 1076.7,135.7 1080.6,126.0 1084.8,114.4 1089.3,102.9 1094.1,98.0 1098.0,101.9 1102.8,105.7 1106.7,105.7 1110.5,101.9 1115.4,102.9 1119.2,104.8 1124.1,104.8 1127.9,108.6 1132.8,110.6 1136.6,110.6 1141.4,110.6 1145.5,111.5" fill="none" stroke="#e61218" stroke-width="2.7" stroke-linejoin="round" stroke-linecap="round" shape-rendering="crispEdges"/>
<text x="937" y="77" font-size="13" fill="#c41a1a" text-anchor="start" textLength="121" lengthAdjust="spacingAndGlyphs" >최고 1,356,000 (07/28)</text>
<line x1="1064" y1="72.5" x2="1078" y2="72.5" stroke="#e01818" stroke-width="1.4" />
<polygon points="1073,68 1080,72.5 1073,77" fill="#e01818"/>
<text x="80" y="384.5" font-size="13" fill="#1a1ab4" text-anchor="start" textLength="113" lengthAdjust="spacingAndGlyphs" >최저 231,000 (08/05)</text>
<line x1="70" y1="380.5" x2="81" y2="380.5" stroke="#0a0ae0" stroke-width="1.4" />
<polygon points="74,375.5 67,380.5 74,385.5" fill="#0a0ae0"/>
<text x="441" y="312" font-size="13" fill="#333" text-anchor="start" textLength="77" lengthAdjust="spacingAndGlyphs" >배당락(0.00%)</text>
<line x1="480.5" y1="316" x2="480.5" y2="331" stroke="#e01818" stroke-width="1" />
<polygon points="477,327 484,327 480.5,333" fill="#e01818"/>
<rect x="7.5" y="57.5" width="4" height="5" fill="#b4b4b4" stroke="#8a8a8a" stroke-width="1" />
<rect x="14.5" y="52.5" width="65" height="14.5" fill="#ececec" stroke="#b0b0b0" stroke-width="1" />
<text x="18" y="64.5" font-size="13" fill="#111" text-anchor="start" textLength="59" lengthAdjust="spacingAndGlyphs" >효성중공업</text>
<rect x="83.5" y="57.5" width="4" height="5" fill="#b4b4b4" stroke="#8a8a8a" stroke-width="1" />
<text x="95" y="64.5" font-size="13" fill="#c8102e" text-anchor="start" textLength="49" lengthAdjust="spacingAndGlyphs" >종가 단순</text>
<text x="150" y="64.5" font-size="13" fill="#c8102e" text-anchor="start" >5</text>
<text x="166" y="64.5" font-size="13" fill="#e09020" text-anchor="start" textLength="10.5" lengthAdjust="spacingAndGlyphs" >10</text>
<text x="185" y="64.5" font-size="13" fill="#f4f040" text-anchor="start" textLength="11" lengthAdjust="spacingAndGlyphs" >20</text>
<text x="204" y="64.5" font-size="13" fill="#2a8a3a" text-anchor="start" textLength="11.5" lengthAdjust="spacingAndGlyphs" >60</text>
<text x="225" y="64.5" font-size="13" fill="#3a5ac8" text-anchor="start" textLength="17" lengthAdjust="spacingAndGlyphs" >120</text>
<rect x="9.5" y="71.5" width="12.5" height="13" fill="#ffffff" stroke="#111" stroke-width="1.2" />
<path d="M11.5 74.5H20M11.5 78H20M11.5 81.5H20M14 73.5V83M17.5 73.5V83" stroke="#666" stroke-width="0.8" fill="none"/>
<g shape-rendering="crispEdges">
<rect x="5" y="474.2" width="3" height="15.4" fill="#1e5fc2" />
<rect x="9" y="472.0" width="3" height="17.7" fill="#1e5fc2" />
<rect x="14" y="459.2" width="3" height="30.4" fill="#1e5fc2" />
<rect x="18" y="475.0" width="3" height="14.7" fill="#dc2a1c" />
<rect x="22" y="468.0" width="3" height="21.7" fill="#1e5fc2" />
<rect x="27" y="443.0" width="3" height="46.7" fill="#dc2a1c" />
<rect x="31" y="454.2" width="3" height="35.4" fill="#dc2a1c" />
<rect x="35" y="463.0" width="3" height="26.7" fill="#1e5fc2" />
<rect x="40" y="470.0" width="3" height="19.7" fill="#dc2a1c" />
<rect x="44" y="462.0" width="3" height="27.7" fill="#dc2a1c" />
<rect x="48" y="461.2" width="3" height="28.4" fill="#1e5fc2" />
<rect x="52" y="473.2" width="3" height="16.4" fill="#1e5fc2" />
<rect x="57" y="476.0" width="3" height="13.7" fill="#1e5fc2" />
<rect x="61" y="459.0" width="3" height="30.7" fill="#1e5fc2" />
<rect x="65" y="464.2" width="3" height="25.4" fill="#1e5fc2" />
<rect x="70" y="472.0" width="3" height="17.7" fill="#dc2a1c" />
<rect x="74" y="476.2" width="3" height="13.4" fill="#dc2a1c" />
<rect x="78" y="479.0" width="3" height="10.7" fill="#dc2a1c" />
<rect x="83" y="479.0" width="3" height="10.7" fill="#dc2a1c" />
<rect x="87" y="482.0" width="3" height="7.7" fill="#dc2a1c" />
<rect x="91" y="480.8" width="3" height="8.9" fill="#1e5fc2" />
<rect x="96" y="480.0" width="3" height="9.7" fill="#1e5fc2" />
<rect x="100" y="474.0" width="3" height="15.7" fill="#dc2a1c" />
<rect x="104" y="482.0" width="3" height="7.7" fill="#1e5fc2" />
<rect x="109" y="478.0" width="3" height="11.7" fill="#dc2a1c" />
<rect x="113" y="479.0" width="3" height="10.7" fill="#dc2a1c" />
<rect x="117" y="480.0" width="3" height="9.7" fill="#1e5fc2" />
<rect x="122" y="480.8" width="3" height="8.9" fill="#dc2a1c" />
<rect x="126" y="479.0" width="3" height="10.7" fill="#1e5fc2" />
<rect x="130" y="465.0" width="3" height="24.7" fill="#1e5fc2" />
<rect x="134" y="479.0" width="3" height="10.7" fill="#1e5fc2" />
<rect x="139" y="471.0" width="3" height="18.7" fill="#1e5fc2" />
<rect x="143" y="479.0" width="3" height="10.7" fill="#dc2a1c" />
<rect x="147" y="482.0" width="3" height="7.7" fill="#1e5fc2" />
<rect x="152" y="481.0" width="3" height="8.7" fill="#dc2a1c" />
<rect x="156" y="476.0" width="3" height="13.7" fill="#dc2a1c" />
<rect x="160" y="477.0" width="3" height="12.7" fill="#1e5fc2" />
<rect x="165" y="476.0" width="3" height="13.7" fill="#1e5fc2" />
<rect x="169" y="478.0" width="3" height="11.7" fill="#dc2a1c" />
<rect x="173" y="478.0" width="3" height="11.7" fill="#1e5fc2" />
<rect x="178" y="474.0" width="3" height="15.7" fill="#dc2a1c" />
<rect x="182" y="479.0" width="3" height="10.7" fill="#1e5fc2" />
<rect x="186" y="484.0" width="3" height="5.7" fill="#1e5fc2" />
<rect x="191" y="473.0" width="3" height="16.7" fill="#dc2a1c" />
<rect x="195" y="472.0" width="3" height="17.7" fill="#1e5fc2" />
<rect x="199" y="468.0" width="3" height="21.7" fill="#dc2a1c" />
<rect x="204" y="478.0" width="3" height="11.7" fill="#dc2a1c" />
<rect x="208" y="475.0" width="3" height="14.7" fill="#1e5fc2" />
<rect x="212" y="475.0" width="3" height="14.7" fill="#dc2a1c" />
<rect x="217" y="481.0" width="3" height="8.7" fill="#1e5fc2" />
<rect x="221" y="479.0" width="3" height="10.7" fill="#1e5fc2" />
<rect x="225" y="482.0" width="3" height="7.7" fill="#dc2a1c" />
<rect x="229" y="481.0" width="3" height="8.7" fill="#1e5fc2" />
<rect x="234" y="472.0" width="3" height="17.7" fill="#dc2a1c" />
<rect x="238" y="478.0" width="3" height="11.7" fill="#1e5fc2" />
<rect x="242" y="475.0" width="3" height="14.7" fill="#dc2a1c" />
<rect x="247" y="479.0" width="3" height="10.7" fill="#1e5fc2" />
<rect x="251" y="473.0" width="3" height="16.7" fill="#dc2a1c" />
<rect x="255" y="480.0" width="3" height="9.7" fill="#1e5fc2" />
<rect x="260" y="477.0" width="3" height="12.7" fill="#dc2a1c" />
<rect x="264" y="479.0" width="3" height="10.7" fill="#dc2a1c" />
<rect x="268" y="481.0" width="3" height="8.7" fill="#1e5fc2" />
<rect x="273" y="479.0" width="3" height="10.7" fill="#1e5fc2" />
<rect x="277" y="478.0" width="3" height="11.7" fill="#1e5fc2" />
<rect x="281" y="481.0" width="3" height="8.7" fill="#dc2a1c" />
<rect x="286" y="481.0" width="3" height="8.7" fill="#dc2a1c" />
<rect x="290" y="476.0" width="3" height="13.7" fill="#1e5fc2" />
<rect x="294" y="477.0" width="3" height="12.7" fill="#dc2a1c" />
<rect x="299" y="481.0" width="3" height="8.7" fill="#dc2a1c" />
<rect x="303" y="484.0" width="3" height="5.7" fill="#1e5fc2" />
<rect x="307" y="482.0" width="3" height="7.7" fill="#dc2a1c" />
<rect x="311" y="466.0" width="3" height="23.7" fill="#dc2a1c" />
<rect x="316" y="473.0" width="3" height="16.7" fill="#dc2a1c" />
<rect x="320" y="477.0" width="3" height="12.7" fill="#dc2a1c" />
<rect x="324" y="466.0" width="3" height="23.7" fill="#dc2a1c" />
<rect x="329" y="476.0" width="3" height="13.7" fill="#1e5fc2" />
<rect x="333" y="477.0" width="3" height="12.7" fill="#1e5fc2" />
<rect x="337" y="470.0" width="3" height="19.7" fill="#dc2a1c" />
<rect x="342" y="471.0" width="3" height="18.7" fill="#dc2a1c" />
<rect x="346" y="472.0" width="3" height="17.7" fill="#1e5fc2" />
<rect x="350" y="477.0" width="3" height="12.7" fill="#dc2a1c" />
<rect x="355" y="478.0" width="3" height="11.7" fill="#1e5fc2" />
<rect x="359" y="477.0" width="3" height="12.7" fill="#1e5fc2" />
<rect x="363" y="479.0" width="3" height="10.7" fill="#dc2a1c" />
<rect x="368" y="477.0" width="3" height="12.7" fill="#1e5fc2" />
<rect x="372" y="476.0" width="3" height="13.7" fill="#1e5fc2" />
<rect x="376" y="439.0" width="3" height="50.7" fill="#1e5fc2" />
<rect x="381" y="458.0" width="3" height="31.7" fill="#1e5fc2" />
<rect x="385" y="472.0" width="3" height="17.7" fill="#dc2a1c" />
<rect x="389" y="471.0" width="3" height="18.7" fill="#dc2a1c" />
<rect x="393" y="472.0" width="3" height="17.7" fill="#1e5fc2" />
<rect x="398" y="476.0" width="3" height="13.7" fill="#dc2a1c" />
<rect x="402" y="478.0" width="3" height="11.7" fill="#1e5fc2" />
<rect x="406" y="471.0" width="3" height="18.7" fill="#dc2a1c" />
<rect x="411" y="473.0" width="3" height="16.7" fill="#dc2a1c" />
<rect x="415" y="474.0" width="3" height="15.7" fill="#dc2a1c" />
<rect x="419" y="475.0" width="3" height="14.7" fill="#1e5fc2" />
<rect x="424" y="480.0" width="3" height="9.7" fill="#dc2a1c" />
<rect x="428" y="480.0" width="3" height="9.7" fill="#dc2a1c" />
<rect x="432" y="479.0" width="3" height="10.7" fill="#dc2a1c" />
<rect x="437" y="460.0" width="3" height="29.7" fill="#1e5fc2" />
<rect x="441" y="472.0" width="3" height="17.7" fill="#1e5fc2" />
<rect x="445" y="477.0" width="3" height="12.7" fill="#dc2a1c" />
<rect x="450" y="479.0" width="3" height="10.7" fill="#dc2a1c" />
<rect x="454" y="473.0" width="3" height="16.7" fill="#1e5fc2" />
<rect x="458" y="480.0" width="3" height="9.7" fill="#dc2a1c" />
<rect x="463" y="479.0" width="3" height="10.7" fill="#1e5fc2" />
<rect x="467" y="480.0" width="3" height="9.7" fill="#dc2a1c" />
<rect x="471" y="438.0" width="3" height="51.7" fill="#1e5fc2" />
<rect x="475" y="477.0" width="3" height="12.7" fill="#1e5fc2" />
<rect x="480" y="481.0" width="3" height="8.7" fill="#1e5fc2" />
<rect x="484" y="482.0" width="3" height="7.7" fill="#dc2a1c" />
<rect x="488" y="479.0" width="3" height="10.7" fill="#dc2a1c" />
<rect x="493" y="477.0" width="3" height="12.7" fill="#dc2a1c" />
<rect x="497" y="479.0" width="3" height="10.7" fill="#1e5fc2" />
<rect x="501" y="478.0" width="3" height="11.7" fill="#dc2a1c" />
<rect x="506" y="482.0" width="3" height="7.7" fill="#dc2a1c" />
<rect x="510" y="479.0" width="3" height="10.7" fill="#dc2a1c" />
<rect x="514" y="479.0" width="3" height="10.7" fill="#1e5fc2" />
<rect x="519" y="482.0" width="3" height="7.7" fill="#1e5fc2" />
<rect x="523" y="481.0" width="3" height="8.7" fill="#1e5fc2" />
<rect x="527" y="473.0" width="3" height="16.7" fill="#dc2a1c" />
<rect x="532" y="472.0" width="3" height="17.7" fill="#dc2a1c" />
<rect x="536" y="474.0" width="3" height="15.7" fill="#dc2a1c" />
<rect x="540" y="462.0" width="3" height="27.7" fill="#1e5fc2" />
<rect x="545" y="480.0" width="3" height="9.7" fill="#dc2a1c" />
<rect x="549" y="468.0" width="3" height="21.7" fill="#dc2a1c" />
<rect x="553" y="478.0" width="3" height="11.7" fill="#1e5fc2" />
<rect x="558" y="475.0" width="3" height="14.7" fill="#dc2a1c" />
<rect x="562" y="454.0" width="3" height="35.7" fill="#1e5fc2" />
<rect x="566" y="469.0" width="3" height="20.7" fill="#dc2a1c" />
<rect x="570" y="457.0" width="3" height="32.7" fill="#dc2a1c" />
<rect x="575" y="480.0" width="3" height="9.7" fill="#1e5fc2" />
<rect x="579" y="469.0" width="3" height="20.7" fill="#dc2a1c" />
<rect x="583" y="477.0" width="3" height="12.7" fill="#1e5fc2" />
<rect x="588" y="477.0" width="3" height="12.7" fill="#1e5fc2" />
<rect x="592" y="481.0" width="3" height="8.7" fill="#dc2a1c" />
<rect x="596" y="478.0" width="3" height="11.7" fill="#dc2a1c" />
<rect x="601" y="479.0" width="3" height="10.7" fill="#1e5fc2" />
<rect x="605" y="476.0" width="3" height="13.7" fill="#1e5fc2" />
<rect x="609" y="474.0" width="3" height="15.7" fill="#1e5fc2" />
<rect x="614" y="471.0" width="3" height="18.7" fill="#dc2a1c" />
<rect x="618" y="476.0" width="3" height="13.7" fill="#1e5fc2" />
<rect x="622" y="476.0" width="3" height="13.7" fill="#1e5fc2" />
<rect x="627" y="481.0" width="3" height="8.7" fill="#dc2a1c" />
<rect x="631" y="475.0" width="3" height="14.7" fill="#1e5fc2" />
<rect x="635" y="481.0" width="3" height="8.7" fill="#dc2a1c" />
<rect x="640" y="479.0" width="3" height="10.7" fill="#dc2a1c" />
<rect x="644" y="480.0" width="3" height="9.7" fill="#1e5fc2" />
<rect x="648" y="474.0" width="3" height="15.7" fill="#1e5fc2" />
<rect x="652" y="479.0" width="3" height="10.7" fill="#dc2a1c" />
<rect x="657" y="479.0" width="3" height="10.7" fill="#dc2a1c" />
<rect x="661" y="477.0" width="3" height="12.7" fill="#1e5fc2" />
<rect x="665" y="479.0" width="3" height="10.7" fill="#1e5fc2" />
<rect x="670" y="481.0" width="3" height="8.7" fill="#dc2a1c" />
<rect x="674" y="479.0" width="3" height="10.7" fill="#dc2a1c" />
<rect x="678" y="481.0" width="3" height="8.7" fill="#dc2a1c" />
<rect x="683" y="477.0" width="3" height="12.7" fill="#1e5fc2" />
<rect x="687" y="479.0" width="3" height="10.7" fill="#dc2a1c" />
<rect x="691" y="478.0" width="3" height="11.7" fill="#dc2a1c" />
<rect x="696" y="481.0" width="3" height="8.7" fill="#1e5fc2" />
<rect x="700" y="480.0" width="3" height="9.7" fill="#1e5fc2" />
<rect x="704" y="481.0" width="3" height="8.7" fill="#1e5fc2" />
<rect x="709" y="481.0" width="3" height="8.7" fill="#1e5fc2" />
<rect x="713" y="483.0" width="3" height="6.7" fill="#dc2a1c" />
<rect x="717" y="481.0" width="3" height="8.7" fill="#1e5fc2" />
<rect x="722" y="480.0" width="3" height="9.7" fill="#dc2a1c" />
<rect x="726" y="477.0" width="3" height="12.7" fill="#1e5fc2" />
<rect x="730" y="478.0" width="3" height="11.7" fill="#1e5fc2" />
<rect x="734" y="482.0" width="3" height="7.7" fill="#1e5fc2" />
<rect x="739" y="479.0" width="3" height="10.7" fill="#1e5fc2" />
<rect x="743" y="481.0" width="3" height="8.7" fill="#1e5fc2" />
<rect x="747" y="478.0" width="3" height="11.7" fill="#dc2a1c" />
<rect x="752" y="478.0" width="3" height="11.7" fill="#dc2a1c" />
<rect x="756" y="475.0" width="3" height="14.7" fill="#1e5fc2" />
<rect x="760" y="483.0" width="3" height="6.7" fill="#dc2a1c" />
<rect x="765" y="480.0" width="3" height="9.7" fill="#1e5fc2" />
<rect x="769" y="477.0" width="3" height="12.7" fill="#dc2a1c" />
<rect x="773" y="482.0" width="3" height="7.7" fill="#dc2a1c" />
<rect x="778" y="481.0" width="3" height="8.7" fill="#1e5fc2" />
<rect x="782" y="476.0" width="3" height="13.7" fill="#dc2a1c" />
<rect x="786" y="481.0" width="3" height="8.7" fill="#1e5fc2" />
<rect x="791" y="480.0" width="3" height="9.7" fill="#dc2a1c" />
<rect x="795" y="483.0" width="3" height="6.7" fill="#dc2a1c" />
<rect x="799" y="483.0" width="3" height="6.7" fill="#1e5fc2" />
<rect x="804" y="472.0" width="3" height="17.7" fill="#1e5fc2" />
<rect x="808" y="479.0" width="3" height="10.7" fill="#1e5fc2" />
<rect x="812" y="482.0" width="3" height="7.7" fill="#1e5fc2" />
<rect x="817" y="475.0" width="3" height="14.7" fill="#dc2a1c" />
<rect x="821" y="475.0" width="3" height="14.7" fill="#dc2a1c" />
<rect x="825" y="472.0" width="3" height="17.7" fill="#dc2a1c" />
<rect x="829" y="479.0" width="3" height="10.7" fill="#1e5fc2" />
<rect x="834" y="479.0" width="3" height="10.7" fill="#dc2a1c" />
<rect x="838" y="479.0" width="3" height="10.7" fill="#dc2a1c" />
<rect x="842" y="473.0" width="3" height="16.7" fill="#dc2a1c" />
<rect x="847" y="476.0" width="3" height="13.7" fill="#1e5fc2" />
<rect x="851" y="477.0" width="3" height="12.7" fill="#dc2a1c" />
<rect x="855" y="478.0" width="3" height="11.7" fill="#dc2a1c" />
<rect x="860" y="477.0" width="3" height="12.7" fill="#dc2a1c" />
<rect x="864" y="466.0" width="3" height="23.7" fill="#1e5fc2" />
<rect x="868" y="480.0" width="3" height="9.7" fill="#dc2a1c" />
<rect x="873" y="477.0" width="3" height="12.7" fill="#1e5fc2" />
<rect x="877" y="478.0" width="3" height="11.7" fill="#1e5fc2" />
<rect x="881" y="479.0" width="3" height="10.7" fill="#dc2a1c" />
<rect x="886" y="417.0" width="3" height="72.7" fill="#1e5fc2" />
<rect x="890" y="472.0" width="3" height="17.7" fill="#1e5fc2" />
<rect x="894" y="480.0" width="3" height="9.7" fill="#1e5fc2" />
<rect x="899" y="481.0" width="3" height="8.7" fill="#dc2a1c" />
<rect x="903" y="475.0" width="3" height="14.7" fill="#1e5fc2" />
<rect x="907" y="464.0" width="3" height="25.7" fill="#dc2a1c" />
<rect x="911" y="480.0" width="3" height="9.7" fill="#dc2a1c" />
<rect x="916" y="479.0" width="3" height="10.7" fill="#dc2a1c" />
<rect x="920" y="481.0" width="3" height="8.7" fill="#1e5fc2" />
<rect x="924" y="481.0" width="3" height="8.7" fill="#1e5fc2" />
<rect x="929" y="479.0" width="3" height="10.7" fill="#dc2a1c" />
<rect x="933" y="476.0" width="3" height="13.7" fill="#dc2a1c" />
<rect x="937" y="478.0" width="3" height="11.7" fill="#1e5fc2" />
<rect x="942" y="479.0" width="3" height="10.7" fill="#1e5fc2" />
<rect x="946" y="480.0" width="3" height="9.7" fill="#1e5fc2" />
<rect x="950" y="464.0" width="3" height="25.7" fill="#dc2a1c" />
<rect x="955" y="472.0" width="3" height="17.7" fill="#1e5fc2" />
<rect x="959" y="470.0" width="3" height="19.7" fill="#dc2a1c" />
<rect x="963" y="473.0" width="3" height="16.7" fill="#dc2a1c" />
<rect x="968" y="466.0" width="3" height="23.7" fill="#1e5fc2" />
<rect x="972" y="478.0" width="3" height="11.7" fill="#dc2a1c" />
<rect x="976" y="473.0" width="3" height="16.7" fill="#1e5fc2" />
<rect x="981" y="473.0" width="3" height="16.7" fill="#dc2a1c" />
<rect x="985" y="478.0" width="3" height="11.7" fill="#dc2a1c" />
<rect x="989" y="480.0" width="3" height="9.7" fill="#1e5fc2" />
<rect x="993" y="477.0" width="3" height="12.7" fill="#dc2a1c" />
<rect x="998" y="478.0" width="3" height="11.7" fill="#dc2a1c" />
<rect x="1002" y="468.0" width="3" height="21.7" fill="#1e5fc2" />
<rect x="1006" y="473.0" width="3" height="16.7" fill="#1e5fc2" />
<rect x="1011" y="471.0" width="3" height="18.7" fill="#1e5fc2" />
<rect x="1015" y="476.0" width="3" height="13.7" fill="#1e5fc2" />
<rect x="1019" y="472.0" width="3" height="17.7" fill="#dc2a1c" />
<rect x="1024" y="470.0" width="3" height="19.7" fill="#1e5fc2" />
<rect x="1028" y="474.0" width="3" height="15.7" fill="#dc2a1c" />
<rect x="1032" y="480.0" width="3" height="9.7" fill="#1e5fc2" />
<rect x="1037" y="476.0" width="3" height="13.7" fill="#dc2a1c" />
<rect x="1041" y="476.0" width="3" height="13.7" fill="#dc2a1c" />
<rect x="1045" y="471.0" width="3" height="18.7" fill="#dc2a1c" />
<rect x="1050" y="475.0" width="3" height="14.7" fill="#1e5fc2" />
<rect x="1054" y="472.0" width="3" height="17.7" fill="#1e5fc2" />
<rect x="1058" y="477.0" width="3" height="12.7" fill="#dc2a1c" />
<rect x="1063" y="475.0" width="3" height="14.7" fill="#1e5fc2" />
<rect x="1067" y="478.0" width="3" height="11.7" fill="#dc2a1c" />
<rect x="1071" y="471.0" width="3" height="18.7" fill="#dc2a1c" />
<rect x="1075" y="466.0" width="3" height="23.7" fill="#dc2a1c" />
<rect x="1080" y="452.0" width="3" height="37.7" fill="#dc2a1c" />
<rect x="1084" y="478.0" width="3" height="11.7" fill="#dc2a1c" />
<rect x="1088" y="477.0" width="3" height="12.7" fill="#1e5fc2" />
<rect x="1093" y="477.0" width="3" height="12.7" fill="#1e5fc2" />
<rect x="1097" y="480.0" width="3" height="9.7" fill="#1e5fc2" />
<rect x="1101" y="480.0" width="3" height="9.7" fill="#dc2a1c" />
<rect x="1106" y="477.0" width="3" height="12.7" fill="#dc2a1c" />
<rect x="1110" y="482.0" width="3" height="7.7" fill="#dc2a1c" />
<rect x="1114" y="476.0" width="3" height="13.7" fill="#1e5fc2" />
<rect x="1119" y="480.0" width="3" height="9.7" fill="#1e5fc2" />
<rect x="1123" y="481.0" width="3" height="8.7" fill="#dc2a1c" />
<rect x="1127" y="479.0" width="3" height="10.7" fill="#dc2a1c" />
<rect x="1132" y="475.0" width="3" height="14.7" fill="#dc2a1c" />
<rect x="1136" y="478.0" width="3" height="11.7" fill="#1e5fc2" />
<rect x="1140" y="472.0" width="3" height="17.7" fill="#1e5fc2" />
<rect x="1145" y="477.0" width="3" height="12.7" fill="#1e5fc2" />
</g>
<rect x="7.5" y="409.5" width="4" height="5" fill="#b4b4b4" stroke="#8a8a8a" stroke-width="1" />
<text x="18" y="417.5" font-size="13" fill="#3a8c8c" text-anchor="start" textLength="35" lengthAdjust="spacingAndGlyphs" >거래량</text>
<text x="8.5" y="430" font-size="13" fill="#222" text-anchor="start" textLength="93" lengthAdjust="spacingAndGlyphs" >79,853주(68.08%)</text>
<polyline points="6.2,510.0 25.0,509.5 32.5,511.2 37.5,508.8 45.0,511.2 52.5,508.0 60.0,506.2 65.0,504.5 75.0,505.0 100.0,505.5 110.0,509.5 120.0,511.2 127.5,510.0 132.5,508.0 150.0,508.0 162.5,507.0 175.0,508.8 185.0,509.5 192.5,513.0 205.0,515.5 215.0,517.0 225.0,517.5 237.5,519.5 250.0,523.0 260.0,524.5 275.0,524.5 287.5,525.0 300.0,525.8 300.0,525.0 307.5,525.0 312.5,528.8 325.0,531.2 332.5,529.5 342.5,532.5 367.5,532.5 377.5,534.5 385.0,534.5 395.0,537.0 402.5,536.2 412.5,540.0 425.0,542.0 437.5,542.5 450.0,543.8 455.0,540.5 466.2,538.0 472.5,533.8 480.0,533.0 492.5,536.2 497.5,534.5 510.0,537.5 523.8,536.2 528.8,540.0 540.0,539.5 550.0,542.0 556.2,542.0 563.8,535.0 571.2,538.8 578.8,540.5 588.8,536.2 600.0,536.2 600.0,535.0 615.0,537.5 625.0,536.2 635.0,534.5 655.0,534.5 665.0,533.0 682.5,533.0 692.5,537.5 700.0,537.0 710.0,538.0 722.5,540.0 730.0,538.0 735.0,538.8 742.5,537.5 757.5,537.0 765.0,535.5 772.5,537.5 780.0,537.0 790.0,538.8 800.0,538.8 807.5,536.2 817.5,536.2 825.0,539.5 835.0,541.2 842.5,542.5 852.5,541.2 862.5,544.5 870.0,545.5 878.8,544.5 882.0,546.2 883.8,560.0 886.2,578.8 895.0,578.8 900.0,579.2 900.0,579.5 915.0,579.5 930.0,579.5 937.5,577.5 945.0,577.5 952.5,579.5 965.0,578.0 977.5,576.2 985.0,577.5 997.5,578.0 1005.0,575.0 1012.5,575.0 1020.0,576.2 1032.5,574.5 1042.5,575.5 1050.0,574.5 1060.0,573.8 1072.5,576.2 1085.0,576.2 1095.0,574.5 1107.5,575.5 1117.5,572.5 1132.5,572.0 1140.0,573.0 1145.5,574.0" fill="none" stroke="#2e9a5c" stroke-width="2.9" stroke-linejoin="round" stroke-linecap="round" shape-rendering="crispEdges"/>
<polyline points="6.2,564.5 10.0,562.5 15.0,566.2 23.8,568.0 31.2,562.5 37.5,566.2 45.0,560.0 51.2,560.0 56.2,555.5 66.2,564.5 75.0,563.0 87.5,560.5 97.5,559.5 107.5,555.5 113.8,550.5 127.5,552.0 132.5,558.8 140.0,562.0 152.5,562.5 160.0,568.8 166.2,571.2 175.0,568.8 185.0,563.8 192.5,558.8 200.0,550.0 205.0,545.5 215.0,544.5 225.0,544.5 232.5,541.2 240.0,538.8 247.5,530.0 255.0,522.5 262.5,518.0 270.0,517.5 277.5,520.0 287.5,520.0 295.0,516.2 300.0,513.0 310.0,508.0 320.0,506.2 332.5,510.5 340.0,509.5 350.0,514.5 357.5,515.0 370.0,520.0 375.0,525.0 381.2,532.5 386.2,530.0 392.5,526.2 400.0,528.0 407.5,529.5 415.0,525.0 425.0,522.5 432.5,522.0 437.5,510.0 445.0,509.5 450.0,507.5 457.5,511.2 463.8,515.0 467.5,514.5 472.5,520.0 476.2,525.0 482.5,523.0 490.0,523.0 493.8,521.2 505.0,523.0 515.0,522.0 523.8,522.0 530.0,516.2 535.0,512.0 545.0,510.5 560.0,510.0 567.5,505.5 577.5,505.5 587.5,511.2 592.5,509.5 600.0,512.0 610.0,511.2 618.8,512.0 625.0,515.0 632.5,519.5 642.5,519.5 650.0,521.2 657.5,520.5 666.2,526.2 672.5,525.5 682.5,525.0 692.5,516.2 700.0,515.0 710.0,514.5 722.5,510.0 732.5,513.0 740.0,512.0 750.0,513.0 757.5,510.0 767.5,512.0 775.0,510.5 785.0,507.5 792.5,505.5 798.8,504.5 805.0,508.8 812.5,511.2 822.5,511.2 830.0,514.5 837.5,517.0 845.0,517.5 852.5,521.2 860.0,520.0 865.0,523.0 870.0,524.5 877.5,529.5 885.0,531.2 892.5,531.2 900.0,532.5 905.0,536.2 911.2,541.2 922.5,540.0 932.5,543.8 942.5,547.0 955.0,548.8 962.5,546.2 972.5,545.0 982.5,546.2 992.5,546.2 998.8,543.0 1007.5,546.2 1015.0,548.8 1022.5,548.0 1032.5,551.2 1040.0,551.2 1050.0,555.5 1060.0,558.8 1065.0,561.2 1075.0,558.0 1082.5,563.0 1092.5,566.2 1102.5,569.5 1112.5,572.0 1122.5,576.2 1132.5,576.2 1140.0,579.5 1145.5,579.5" fill="none" stroke="#2f63e6" stroke-width="2.9" stroke-linejoin="round" stroke-linecap="round" shape-rendering="crispEdges"/>
<polyline points="6.2,573.0 30.0,572.5 42.5,573.8 52.5,576.2 60.0,578.0 68.8,576.2 75.0,578.0 87.5,579.5 100.0,578.0 112.5,578.0 125.0,577.0 137.5,575.5 150.0,575.0 162.5,573.0 175.0,572.0 185.0,573.0 191.2,571.2 200.0,575.0 212.5,574.5 225.0,573.0 235.0,570.5 245.0,570.5 255.0,573.0 265.0,573.0 280.0,572.0 292.5,573.0 300.0,574.5 312.5,572.0 325.0,570.5 337.5,568.8 350.0,565.0 360.0,565.5 370.0,563.8 377.5,558.0 382.5,557.0 390.0,558.0 402.5,557.0 407.5,555.5 417.5,556.2 432.5,555.5 437.5,559.5 446.2,558.0 455.0,560.0 465.0,558.8 472.5,561.2 482.5,560.0 495.0,559.5 498.8,560.0 505.0,558.0 515.0,558.8 527.5,557.0 535.0,559.5 541.2,561.2 548.8,558.0 557.5,559.5 562.5,564.5 566.2,566.2 572.5,563.0 580.0,562.5 587.5,563.5 600.0,563.2 612.5,563.0 620.0,561.2 630.0,560.0 640.0,561.2 650.0,560.0 660.0,560.5 667.5,559.0 680.0,560.0 687.5,559.0 697.5,558.0 702.5,559.5 710.0,558.2 720.0,559.2 735.0,559.2 750.0,560.0 757.5,562.0 772.5,561.2 782.5,563.2 792.5,563.0 815.0,563.0 825.0,559.5 835.0,557.0 842.5,555.5 850.0,555.5 860.0,553.0 867.5,550.5 875.0,548.8 881.2,548.0 883.8,535.0 886.2,519.5 900.0,518.8 907.5,516.2 925.0,515.5 945.0,515.0 952.5,513.0 960.0,515.0 970.0,516.2 995.0,516.2 1002.5,517.0 1015.0,515.5 1025.0,517.0 1040.0,515.0 1055.0,513.0 1065.0,510.5 1075.0,510.5 1085.0,508.0 1097.5,508.0 1107.5,506.2 1115.0,507.0 1125.0,505.5 1135.0,505.0 1145.5,504.0" fill="none" stroke="#e0121a" stroke-width="2.9" stroke-linejoin="round" stroke-linecap="round" shape-rendering="crispEdges"/>
<rect x="7.5" y="495.5" width="4" height="5" fill="#b4b4b4" stroke="#8a8a8a" stroke-width="1" />
<text x="18.5" y="503" font-size="13" fill="#c8102e" text-anchor="start" textLength="84" lengthAdjust="spacingAndGlyphs" >외국인보유수량</text>
<rect x="107.5" y="495.5" width="4" height="5" fill="#b4b4b4" stroke="#8a8a8a" stroke-width="1" />
<text x="118" y="503" font-size="13" fill="#2a5ad0" text-anchor="start" textLength="72" lengthAdjust="spacingAndGlyphs" >기관보유수량</text>
<rect x="195.5" y="495.5" width="4" height="5" fill="#b4b4b4" stroke="#8a8a8a" stroke-width="1" />
<text x="206" y="503" font-size="13" fill="#2e8a5a" text-anchor="start" textLength="72" lengthAdjust="spacingAndGlyphs" >개인보유수량</text>
<g shape-rendering="crispEdges">
<line x1="3.5" y1="51.5" x2="1245" y2="51.5" stroke="#8c8c8c" stroke-width="1" />
<line x1="3.5" y1="51.5" x2="3.5" y2="600.5" stroke="#767676" stroke-width="1" />
<line x1="4" y1="403.5" x2="1245" y2="403.5" stroke="#6e6e6e" stroke-width="1" />
<line x1="4" y1="490.5" x2="1245" y2="490.5" stroke="#6e6e6e" stroke-width="1" />
<line x1="4" y1="582.5" x2="1245" y2="582.5" stroke="#8c8c8c" stroke-width="1" />
<line x1="1179.5" y1="52" x2="1179.5" y2="600" stroke="#9aa6b8" stroke-width="1" />
<line x1="1244.5" y1="52" x2="1244.5" y2="600" stroke="#9aa6b8" stroke-width="1" />
<line x1="3" y1="600.5" x2="1245" y2="600.5" stroke="#8c8c8c" stroke-width="1" />
</g>
<text x="1180.5" y="64" font-size="13" fill="#c8202e" text-anchor="start" textLength="55" lengthAdjust="spacingAndGlyphs" >LC:399.57</text>
<text x="1180.5" y="76" font-size="13" fill="#2a50b0" text-anchor="start" textLength="56" lengthAdjust="spacingAndGlyphs" >HC:-14.90</text>
<g shape-rendering="crispEdges">
<line x1="1180" y1="392.5" x2="1186" y2="392.5" stroke="#5a6472" stroke-width="1" />
<line x1="1180" y1="398.5" x2="1183" y2="398.5" stroke="#8a94a4" stroke-width="1" />
<line x1="1180" y1="364.5" x2="1186" y2="364.5" stroke="#5a6472" stroke-width="1" />
<line x1="1180" y1="370.5" x2="1183" y2="370.5" stroke="#8a94a4" stroke-width="1" />
<line x1="1180" y1="375.5" x2="1183" y2="375.5" stroke="#8a94a4" stroke-width="1" />
<line x1="1180" y1="381.5" x2="1183" y2="381.5" stroke="#8a94a4" stroke-width="1" />
<line x1="1180" y1="386.5" x2="1183" y2="386.5" stroke="#8a94a4" stroke-width="1" />
<line x1="1180" y1="336.5" x2="1186" y2="336.5" stroke="#5a6472" stroke-width="1" />
<line x1="1180" y1="342.5" x2="1183" y2="342.5" stroke="#8a94a4" stroke-width="1" />
<line x1="1180" y1="347.5" x2="1183" y2="347.5" stroke="#8a94a4" stroke-width="1" />
<line x1="1180" y1="353.5" x2="1183" y2="353.5" stroke="#8a94a4" stroke-width="1" />
<line x1="1180" y1="359.5" x2="1183" y2="359.5" stroke="#8a94a4" stroke-width="1" />
<line x1="1180" y1="308.5" x2="1186" y2="308.5" stroke="#5a6472" stroke-width="1" />
<line x1="1180" y1="314.5" x2="1183" y2="314.5" stroke="#8a94a4" stroke-width="1" />
<line x1="1180" y1="319.5" x2="1183" y2="319.5" stroke="#8a94a4" stroke-width="1" />
<line x1="1180" y1="325.5" x2="1183" y2="325.5" stroke="#8a94a4" stroke-width="1" />
<line x1="1180" y1="331.5" x2="1183" y2="331.5" stroke="#8a94a4" stroke-width="1" />
<line x1="1180" y1="280.5" x2="1186" y2="280.5" stroke="#5a6472" stroke-width="1" />
<line x1="1180" y1="286.5" x2="1183" y2="286.5" stroke="#8a94a4" stroke-width="1" />
<line x1="1180" y1="292.5" x2="1183" y2="292.5" stroke="#8a94a4" stroke-width="1" />
<line x1="1180" y1="297.5" x2="1183" y2="297.5" stroke="#8a94a4" stroke-width="1" />
<line x1="1180" y1="303.5" x2="1183" y2="303.5" stroke="#8a94a4" stroke-width="1" />
<line x1="1180" y1="253.5" x2="1186" y2="253.5" stroke="#5a6472" stroke-width="1" />
<line x1="1180" y1="258.5" x2="1183" y2="258.5" stroke="#8a94a4" stroke-width="1" />
<line x1="1180" y1="264.5" x2="1183" y2="264.5" stroke="#8a94a4" stroke-width="1" />
<line x1="1180" y1="269.5" x2="1183" y2="269.5" stroke="#8a94a4" stroke-width="1" />
<line x1="1180" y1="275.5" x2="1183" y2="275.5" stroke="#8a94a4" stroke-width="1" />
<line x1="1180" y1="225.5" x2="1186" y2="225.5" stroke="#5a6472" stroke-width="1" />
<line x1="1180" y1="230.5" x2="1183" y2="230.5" stroke="#8a94a4" stroke-width="1" />
<line x1="1180" y1="236.5" x2="1183" y2="236.5" stroke="#8a94a4" stroke-width="1" />
<line x1="1180" y1="241.5" x2="1183" y2="241.5" stroke="#8a94a4" stroke-width="1" />
<line x1="1180" y1="247.5" x2="1183" y2="247.5" stroke="#8a94a4" stroke-width="1" />
<line x1="1180" y1="197.5" x2="1186" y2="197.5" stroke="#5a6472" stroke-width="1" />
<line x1="1180" y1="202.5" x2="1183" y2="202.5" stroke="#8a94a4" stroke-width="1" />
<line x1="1180" y1="208.5" x2="1183" y2="208.5" stroke="#8a94a4" stroke-width="1" />
<line x1="1180" y1="213.5" x2="1183" y2="213.5" stroke="#8a94a4" stroke-width="1" />
<line x1="1180" y1="219.5" x2="1183" y2="219.5" stroke="#8a94a4" stroke-width="1" />
<line x1="1180" y1="169.5" x2="1186" y2="169.5" stroke="#5a6472" stroke-width="1" />
<line x1="1180" y1="174.5" x2="1183" y2="174.5" stroke="#8a94a4" stroke-width="1" />
<line x1="1180" y1="180.5" x2="1183" y2="180.5" stroke="#8a94a4" stroke-width="1" />
<line x1="1180" y1="186.5" x2="1183" y2="186.5" stroke="#8a94a4" stroke-width="1" />
<line x1="1180" y1="191.5" x2="1183" y2="191.5" stroke="#8a94a4" stroke-width="1" />
<line x1="1180" y1="141.5" x2="1186" y2="141.5" stroke="#5a6472" stroke-width="1" />
<line x1="1180" y1="146.5" x2="1183" y2="146.5" stroke="#8a94a4" stroke-width="1" />
<line x1="1180" y1="152.5" x2="1183" y2="152.5" stroke="#8a94a4" stroke-width="1" />
<line x1="1180" y1="158.5" x2="1183" y2="158.5" stroke="#8a94a4" stroke-width="1" />
<line x1="1180" y1="163.5" x2="1183" y2="163.5" stroke="#8a94a4" stroke-width="1" />
<line x1="1180" y1="113.5" x2="1186" y2="113.5" stroke="#5a6472" stroke-width="1" />
<line x1="1180" y1="119.5" x2="1183" y2="119.5" stroke="#8a94a4" stroke-width="1" />
<line x1="1180" y1="124.5" x2="1183" y2="124.5" stroke="#8a94a4" stroke-width="1" />
<line x1="1180" y1="130.5" x2="1183" y2="130.5" stroke="#8a94a4" stroke-width="1" />
<line x1="1180" y1="135.5" x2="1183" y2="135.5" stroke="#8a94a4" stroke-width="1" />
<line x1="1180" y1="85.5" x2="1186" y2="85.5" stroke="#5a6472" stroke-width="1" />
<line x1="1180" y1="74.5" x2="1183" y2="74.5" stroke="#8a94a4" stroke-width="1" />
<line x1="1180" y1="80.5" x2="1183" y2="80.5" stroke="#8a94a4" stroke-width="1" />
<line x1="1180" y1="91.5" x2="1183" y2="91.5" stroke="#8a94a4" stroke-width="1" />
<line x1="1180" y1="96.5" x2="1183" y2="96.5" stroke="#8a94a4" stroke-width="1" />
<line x1="1180" y1="102.5" x2="1183" y2="102.5" stroke="#8a94a4" stroke-width="1" />
<line x1="1180" y1="107.5" x2="1183" y2="107.5" stroke="#8a94a4" stroke-width="1" />
</g>
<text x="1188" y="395.8" font-size="13" fill="#333c48" text-anchor="start" textLength="38.5" lengthAdjust="spacingAndGlyphs" >200,000</text>
<text x="1188" y="367.8" font-size="13" fill="#333c48" text-anchor="start" textLength="38.5" lengthAdjust="spacingAndGlyphs" >300,000</text>
<text x="1188" y="339.8" font-size="13" fill="#333c48" text-anchor="start" textLength="38.5" lengthAdjust="spacingAndGlyphs" >400,000</text>
<text x="1188" y="311.8" font-size="13" fill="#333c48" text-anchor="start" textLength="38.5" lengthAdjust="spacingAndGlyphs" >500,000</text>
<text x="1188" y="283.8" font-size="13" fill="#333c48" text-anchor="start" textLength="38.5" lengthAdjust="spacingAndGlyphs" >600,000</text>
<text x="1188" y="256.8" font-size="13" fill="#333c48" text-anchor="start" textLength="38.5" lengthAdjust="spacingAndGlyphs" >700,000</text>
<text x="1188" y="228.8" font-size="13" fill="#333c48" text-anchor="start" textLength="38.5" lengthAdjust="spacingAndGlyphs" >800,000</text>
<text x="1188" y="200.8" font-size="13" fill="#333c48" text-anchor="start" textLength="38.5" lengthAdjust="spacingAndGlyphs" >900,000</text>
<text x="1188" y="172.8" font-size="13" fill="#333c48" text-anchor="start" textLength="49" lengthAdjust="spacingAndGlyphs" >1,000,000</text>
<text x="1188" y="116.8" font-size="13" fill="#333c48" text-anchor="start" textLength="49" lengthAdjust="spacingAndGlyphs" >1,200,000</text>
<text x="1188" y="88.8" font-size="13" fill="#333c48" text-anchor="start" textLength="49" lengthAdjust="spacingAndGlyphs" >1,300,000</text>
<rect x="1184" y="119" width="58.5" height="12.5" fill="#1a5acc" />
<text x="1188.5" y="129.5" font-size="13" fill="#ffffff" text-anchor="start" textLength="49" lengthAdjust="spacingAndGlyphs" >1,154,000</text>
<text x="1188.5" y="141" font-size="13" fill="#2a50b0" text-anchor="start" textLength="37" lengthAdjust="spacingAndGlyphs" >-1.79%</text>
<line x1="1188" y1="144.5" x2="1238" y2="144.5" stroke="#2a3c78" stroke-width="1" stroke-dasharray="3,3" shape-rendering="crispEdges"/>
<g shape-rendering="crispEdges">
<line x1="1180" y1="420.5" x2="1186" y2="420.5" stroke="#5a6472" stroke-width="1" />
<line x1="1180" y1="454.5" x2="1186" y2="454.5" stroke="#5a6472" stroke-width="1" />
<line x1="1180" y1="409.5" x2="1183" y2="409.5" stroke="#8a94a4" stroke-width="1" />
<line x1="1180" y1="414.5" x2="1183" y2="414.5" stroke="#8a94a4" stroke-width="1" />
<line x1="1180" y1="426.5" x2="1183" y2="426.5" stroke="#8a94a4" stroke-width="1" />
<line x1="1180" y1="431.5" x2="1183" y2="431.5" stroke="#8a94a4" stroke-width="1" />
<line x1="1180" y1="437.5" x2="1183" y2="437.5" stroke="#8a94a4" stroke-width="1" />
<line x1="1180" y1="443.5" x2="1183" y2="443.5" stroke="#8a94a4" stroke-width="1" />
<line x1="1180" y1="448.5" x2="1183" y2="448.5" stroke="#8a94a4" stroke-width="1" />
<line x1="1180" y1="460.5" x2="1183" y2="460.5" stroke="#8a94a4" stroke-width="1" />
<line x1="1180" y1="465.5" x2="1183" y2="465.5" stroke="#8a94a4" stroke-width="1" />
<line x1="1180" y1="471.5" x2="1183" y2="471.5" stroke="#8a94a4" stroke-width="1" />
<line x1="1180" y1="477.5" x2="1183" y2="477.5" stroke="#8a94a4" stroke-width="1" />
<line x1="1180" y1="482.5" x2="1183" y2="482.5" stroke="#8a94a4" stroke-width="1" />
</g>
<text x="1187.5" y="423.8" font-size="13" fill="#333c48" text-anchor="start" textLength="39.5" lengthAdjust="spacingAndGlyphs" >500,000</text>
<text x="1187.5" y="457.9" font-size="13" fill="#333c48" text-anchor="start" textLength="39.5" lengthAdjust="spacingAndGlyphs" >250,000</text>
<rect x="1184" y="464.5" width="58" height="12" fill="#1a5acc" />
<text x="1188.3" y="475" font-size="13" fill="#ffffff" text-anchor="start" textLength="33" lengthAdjust="spacingAndGlyphs" >79,853</text>
<text x="1187.5" y="486.9" font-size="13" fill="#2a50b0" text-anchor="start" textLength="36.5" lengthAdjust="spacingAndGlyphs" >68.08%</text>
<rect x="1234" y="407" width="8" height="7" fill="#4a505c" />
<path d="M1236 409 l4 3 M1240 409 l-4 3" stroke="#fff" stroke-width="1"/>
<rect x="1234" y="494" width="8" height="7" fill="#4a505c" />
<path d="M1236 496 l4 3 M1240 496 l-4 3" stroke="#fff" stroke-width="1"/>
<g shape-rendering="crispEdges">
<line x1="1180" y1="514.5" x2="1186" y2="514.5" stroke="#5a6472" stroke-width="1" />
<line x1="1180" y1="552.5" x2="1186" y2="552.5" stroke="#5a6472" stroke-width="1" />
<line x1="1180" y1="499.5" x2="1183" y2="499.5" stroke="#8a94a4" stroke-width="1" />
<line x1="1180" y1="506.5" x2="1183" y2="506.5" stroke="#8a94a4" stroke-width="1" />
<line x1="1180" y1="522.5" x2="1183" y2="522.5" stroke="#8a94a4" stroke-width="1" />
<line x1="1180" y1="529.5" x2="1183" y2="529.5" stroke="#8a94a4" stroke-width="1" />
<line x1="1180" y1="537.5" x2="1183" y2="537.5" stroke="#8a94a4" stroke-width="1" />
<line x1="1180" y1="544.5" x2="1183" y2="544.5" stroke="#8a94a4" stroke-width="1" />
<line x1="1180" y1="560.5" x2="1183" y2="560.5" stroke="#8a94a4" stroke-width="1" />
<line x1="1180" y1="567.5" x2="1183" y2="567.5" stroke="#8a94a4" stroke-width="1" />
<line x1="1180" y1="575.5" x2="1183" y2="575.5" stroke="#8a94a4" stroke-width="1" />
</g>
<text x="1188" y="518.7" font-size="13" fill="#333c48" text-anchor="start" textLength="55" lengthAdjust="spacingAndGlyphs" >-1,000,000</text>
<text x="1188" y="556.7" font-size="13" fill="#333c48" text-anchor="start" textLength="55" lengthAdjust="spacingAndGlyphs" >-1,500,000</text>
<text x="5" y="594.6" font-size="13" fill="#333c48" text-anchor="start" textLength="43" lengthAdjust="spacingAndGlyphs" >2024/07</text>
<text x="57" y="594.6" font-size="13" fill="#333c48" text-anchor="start" textLength="12" lengthAdjust="spacingAndGlyphs" >08</text>
<text x="148" y="594.6" font-size="13" fill="#333c48" text-anchor="start" textLength="12" lengthAdjust="spacingAndGlyphs" >09</text>
<text x="226" y="594.6" font-size="13" fill="#333c48" text-anchor="start" textLength="12" lengthAdjust="spacingAndGlyphs" >10</text>
<text x="313" y="594.6" font-size="13" fill="#333c48" text-anchor="start" textLength="11" lengthAdjust="spacingAndGlyphs" >11</text>
<text x="403" y="594.6" font-size="13" fill="#333c48" text-anchor="start" textLength="12" lengthAdjust="spacingAndGlyphs" >12</text>
<text x="488" y="594.6" font-size="13" fill="#333c48" text-anchor="start" textLength="43" lengthAdjust="spacingAndGlyphs" >2025/01</text>
<text x="567" y="594.6" font-size="13" fill="#333c48" text-anchor="start" textLength="12" lengthAdjust="spacingAndGlyphs" >02</text>
<text x="653" y="594.6" font-size="13" fill="#333c48" text-anchor="start" textLength="12" lengthAdjust="spacingAndGlyphs" >03</text>
<text x="739" y="594.6" font-size="13" fill="#333c48" text-anchor="start" textLength="12" lengthAdjust="spacingAndGlyphs" >04</text>
<text x="834" y="594.6" font-size="13" fill="#333c48" text-anchor="start" textLength="12" lengthAdjust="spacingAndGlyphs" >05</text>
<text x="916" y="594.6" font-size="13" fill="#333c48" text-anchor="start" textLength="12" lengthAdjust="spacingAndGlyphs" >06</text>
<text x="998" y="594.6" font-size="13" fill="#333c48" text-anchor="start" textLength="12" lengthAdjust="spacingAndGlyphs" >07</text>
<text x="1097" y="594.6" font-size="13" fill="#333c48" text-anchor="start" textLength="12" lengthAdjust="spacingAndGlyphs" >08</text>
<text x="1187.5" y="594.6" font-size="13" fill="#333c48" text-anchor="start" textLength="30" lengthAdjust="spacingAndGlyphs" >08/19</text>
<rect x="3" y="601" width="1242" height="17" fill="#eeeeee" />
<rect x="18.5" y="601" width="857" height="16.5" fill="#f7f7f7" />
<rect x="498" y="601" width="377.5" height="16" fill="#ebebeb" />
<line x1="498" y1="617.5" x2="876" y2="617.5" stroke="#707070" stroke-width="1" shape-rendering="crispEdges"/>
<line x1="498.5" y1="601" x2="498.5" y2="617" stroke="#c8c8c8" stroke-width="1" shape-rendering="crispEdges"/>
<rect x="3.5" y="601" width="15" height="16.5" fill="#f4f4f4" />
<line x1="18.5" y1="601" x2="18.5" y2="617.5" stroke="#a8a8a8" stroke-width="1" shape-rendering="crispEdges"/>
<line x1="3.5" y1="617.5" x2="19" y2="617.5" stroke="#707070" stroke-width="1" shape-rendering="crispEdges"/>
<polygon points="12.5,605 12.5,613.5 8,609.2" fill="#111"/>
<rect x="876.5" y="601.5" width="16.5" height="16" fill="#f4f4f4" stroke="#a0a0a0" stroke-width="1" shape-rendering="crispEdges"/>
<rect x="893.5" y="601.5" width="16.5" height="16" fill="#f4f4f4" stroke="#a0a0a0" stroke-width="1" shape-rendering="crispEdges"/>
<rect x="910.5" y="601.5" width="16.5" height="16" fill="#f4f4f4" stroke="#a0a0a0" stroke-width="1" shape-rendering="crispEdges"/>
<rect x="927.5" y="601.5" width="16.5" height="16" fill="#f4f4f4" stroke="#a0a0a0" stroke-width="1" shape-rendering="crispEdges"/>
<polygon points="882,604.5 882,613.5 888,609" fill="#111"/>
<polygon points="901.5,605 901.5,613 896.5,609" fill="#111"/><polygon points="907,605 907,613 902,609" fill="#111"/>
<rect x="915.5" y="605.5" width="7" height="7" fill="#111" />
<polygon points="931,605 931,613 936,609" fill="#111"/><polygon points="936.5,605 936.5,613 941.5,609" fill="#111"/>
<line x1="949.5" y1="606.3" x2="1017" y2="606.3" stroke="#9a9a9a" stroke-width="1.6" />
<rect x="981.5" y="602.5" width="2" height="10" fill="#8a8a8a" />
<line x1="951.5" y1="615" x2="951.5" y2="617.5" stroke="#444" stroke-width="1" shape-rendering="crispEdges"/>
<line x1="957.5" y1="615" x2="957.5" y2="617.5" stroke="#444" stroke-width="1" shape-rendering="crispEdges"/>
<line x1="964.5" y1="615" x2="964.5" y2="617.5" stroke="#444" stroke-width="1" shape-rendering="crispEdges"/>
<line x1="970.5" y1="615" x2="970.5" y2="617.5" stroke="#444" stroke-width="1" shape-rendering="crispEdges"/>
<line x1="977.5" y1="615" x2="977.5" y2="617.5" stroke="#444" stroke-width="1" shape-rendering="crispEdges"/>
<line x1="983.5" y1="615" x2="983.5" y2="617.5" stroke="#444" stroke-width="1" shape-rendering="crispEdges"/>
<line x1="990.5" y1="615" x2="990.5" y2="617.5" stroke="#444" stroke-width="1" shape-rendering="crispEdges"/>
<line x1="996.5" y1="615" x2="996.5" y2="617.5" stroke="#444" stroke-width="1" shape-rendering="crispEdges"/>
<line x1="1003.5" y1="615" x2="1003.5" y2="617.5" stroke="#444" stroke-width="1" shape-rendering="crispEdges"/>
<line x1="1009.5" y1="615" x2="1009.5" y2="617.5" stroke="#444" stroke-width="1" shape-rendering="crispEdges"/>
<line x1="1016.5" y1="615" x2="1016.5" y2="617.5" stroke="#444" stroke-width="1" shape-rendering="crispEdges"/>
<g fill="none" stroke="#8a8a8a" stroke-width="1.1">
<rect x="1027.5" y="603.5" width="9" height="8" fill="#f8f8f8"/><rect x="1033.5" y="608.5" width="7" height="6" fill="#f8f8f8"/><path d="M1033.5 611.5h7M1037 608.5v6"/>
<rect x="1043.5" y="603.5" width="9" height="7" fill="#f8f8f8"/><rect x="1047.5" y="607.5" width="9" height="7" fill="#f8f8f8"/>
<path d="M1060 605.5h14M1060 613.5h14" stroke-dasharray="2,1.5"/><path d="M1061 611l4-3 4 2 5-4"/>
</g>
<rect x="1076.5" y="601.5" width="15.5" height="16" fill="#fcfcfc" stroke="#c4c4c4" stroke-width="1" shape-rendering="crispEdges"/>
<g fill="none" stroke="#8a8a8a" stroke-width="1.2">
<path d="M1082.5 604v12M1080 606.5h12M1084 608l5 5M1084 608h3.5M1084 608v3.5"/>
<path d="M1096 606.5h13M1096 613l3-3 3 2 4-4 3 3" /><path d="M1103 606.5v8" />
<path d="M1112 614l2-8 2 6 2-9 2 8 2-4 3 5"/>
<path d="M1129 614l5-8 2 4 3-5 3 9M1131 615l6-6"/>
<path d="M1145 609l5-4h8v5l-5 4h-8zM1150 605v5M1145 609h8M1155 612v4M1157.5 611v5M1160 612v4"/>
<rect x="1166.5" y="603.5" width="10" height="7" fill="#f8f8f8"/><rect x="1163.500" y="607.5" width="10" height="8" fill="#f8f8f8"/><path d="M1165 613l2.5-2.500 2 1.500 3-3"/>
</g>
<circle cx="1185" cy="608" r="4" fill="none" stroke="#707070" stroke-width="1.4"/>
<line x1="1188" y1="611" x2="1192" y2="615" stroke="#707070" stroke-width="2" />
<rect x="1198" y="608.5" width="10" height="2.2" fill="#777" />
<rect x="1215" y="608.9" width="10" height="2.1" fill="#444" />
<rect x="1218.95" y="605" width="2.1" height="10" fill="#444" />
<text x="1236.5" y="615" font-size="14" fill="#4a4a4a" text-anchor="middle" font-weight="bold">A</text>
</svg>
</body></html>
